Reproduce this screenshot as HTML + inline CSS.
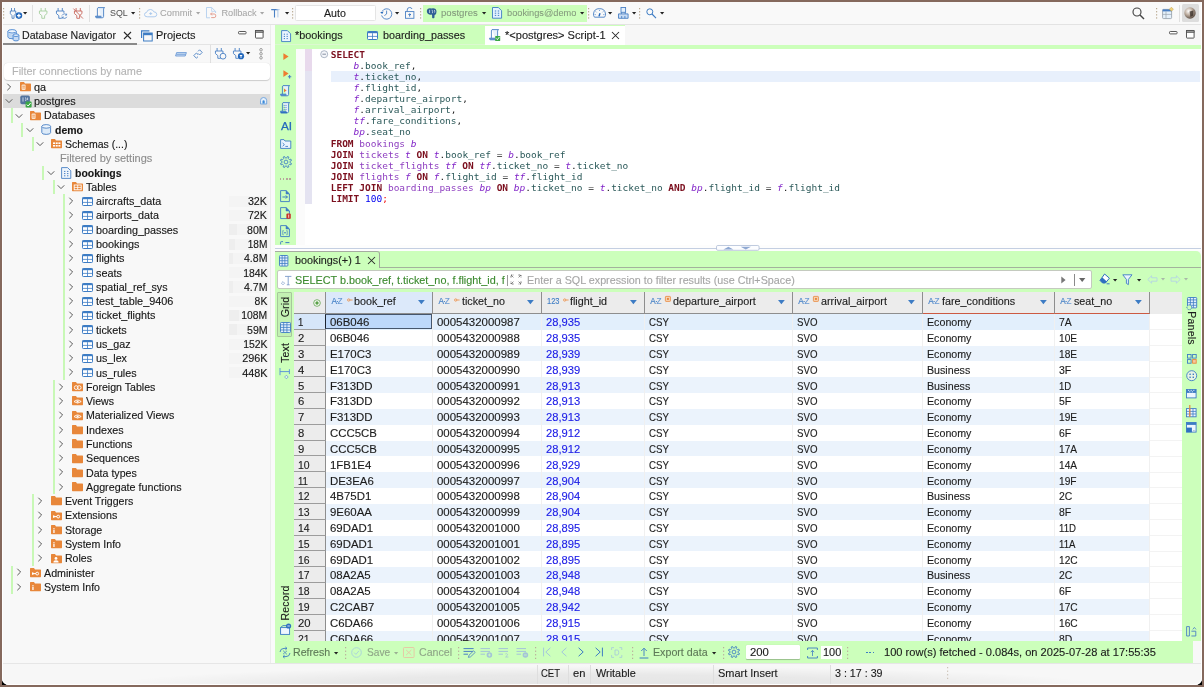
<!DOCTYPE html>
<html lang="en"><head><meta charset="utf-8"><title>DBeaver</title><style>
html,body{margin:0;padding:0;}
body{width:1204px;height:687px;overflow:hidden;position:relative;background:#85695d;font-family:"Liberation Sans",sans-serif;}
#w{position:absolute;left:0;top:0;width:1204px;height:687px;overflow:hidden;will-change:transform;}
#w div,#w svg{position:absolute;}
#w svg{overflow:visible;display:block;}
.t{white-space:pre;line-height:16px;height:16px;}
.m{font-family:"DejaVu Sans Mono","Liberation Mono",monospace;}
.t span{position:static;}
.t{-webkit-text-stroke-width:0.12px;}
.m{-webkit-text-stroke-width:0;}
.kw{color:#7b0f1e;font-weight:bold;}
.al{color:#8226c8;font-style:italic;}
.tb{color:#8e3fc0;}
.co{color:#2c5a5a;}
.nu{color:#0000f0;}
.sc{color:#f00000;}
</style></head><body><div id="w">
<div style="left:2px;top:676px;width:9px;height:9px;background:#000;"></div><div style="left:1193px;top:676px;width:9px;height:9px;background:#000;"></div>
<div style="left:2.00px;top:2.00px;width:1200.00px;height:683.00px;background:#f9f9f9;border-radius:0 0 7px 7px;"></div>
<div style="left:2.00px;top:24.00px;width:1200.00px;height:1.00px;background:#e3e3e3;"></div>
<svg style="left:3.20px;top:7.60px;" width="1.20" height="10.60" viewBox="0 0 1.2 10.6"><rect x="0" y="0.00" width="1.2" height="1.2" fill="#b5a48a"/><rect x="0" y="3.13" width="1.2" height="1.2" fill="#b5a48a"/><rect x="0" y="6.27" width="1.2" height="1.2" fill="#b5a48a"/><rect x="0" y="9.40" width="1.2" height="1.2" fill="#b5a48a"/></svg>
<svg style="left:9.98px;top:8.20px;" width="16.00" height="12.00" viewBox="0 0 16 12"><g transform="scale(0.720,1)"><path d="M2.1 0 V3 M6.3 0 V3" stroke="#3a72b8" stroke-width="0.9" fill="none"/><path d="M0.45 3 H7.95 V5.6 L5.6 7.6 V10.3 H2.8 V7.6 L0.45 5.6 Z" fill="none" stroke="#3a72b8" stroke-width="0.9" stroke-linejoin="round"/></g><circle cx="8.9" cy="7.6" r="3.3" fill="#2468bc"/><path d="M8.9 5.8 V9.4 M7.1 7.6 H10.7" stroke="#fff" stroke-width="1.3"/></svg>
<svg style="left:23.38px;top:12.32px;" width="4.25" height="2.55" viewBox="0 0 5 3"><path d="M0 0 H5 L2.5 3 Z" fill="#222"/></svg>
<div style="left:32.00px;top:4.60px;width:0.90px;height:17.20px;background:#e0e0e0;"></div>
<svg style="left:39.10px;top:7.60px;" width="16.00" height="12.00" viewBox="0 0 16 12"><g transform="scale(1.000,1)"><path d="M2.1 0 V3 M6.3 0 V3" stroke="#a6cf9e" stroke-width="0.9" fill="none"/><path d="M0.45 3 H7.95 V5.6 L5.6 7.6 V10.3 H2.8 V7.6 L0.45 5.6 Z" fill="none" stroke="#a6cf9e" stroke-width="0.9" stroke-linejoin="round"/></g></svg>
<svg style="left:55.80px;top:7.60px;" width="16.00" height="12.00" viewBox="0 0 16 12"><g transform="scale(1.000,1)"><path d="M2.1 0 V3 M6.3 0 V3" stroke="#4a80c4" stroke-width="0.9" fill="none"/><path d="M0.45 3 H7.95 V5.6 L5.6 7.6 V10.3 H2.8 V7.6 L0.45 5.6 Z" fill="none" stroke="#4a80c4" stroke-width="0.9" stroke-linejoin="round"/></g><circle cx="8.4" cy="8" r="3.2" fill="#f9f9f9"/><path d="M6.2 7.4 Q7 5.6 8.8 5.8 Q10 6 10.6 7 M10.6 5.6 V7.2 H9.2" stroke="#4a80c4" stroke-width="0.8" fill="none"/><path d="M10.8 8.8 Q10 10.6 8.2 10.4 Q7 10.2 6.4 9.2 M6.4 10.6 V9 H7.8" stroke="#4a80c4" stroke-width="0.8" fill="none"/></svg>
<svg style="left:73.80px;top:7.60px;" width="16.00" height="12.00" viewBox="0 0 16 12"><g transform="scale(1.000,1)"><path d="M2.1 0 V3 M6.3 0 V3" stroke="#c8685e" stroke-width="0.9" fill="none"/><path d="M0.45 3 H7.95 V5.6 L5.6 7.6 V10.3 H2.8 V7.6 L0.45 5.6 Z" fill="none" stroke="#c8685e" stroke-width="0.9" stroke-linejoin="round"/></g><path d="M-0.6 0.6 L9 10.6" stroke="#c8685e" stroke-width="0.9"/></svg>
<div style="left:88.80px;top:4.60px;width:0.90px;height:17.20px;background:#e0e0e0;"></div>
<svg style="left:94.80px;top:7.20px;" width="11.00" height="12.00" viewBox="0 0 11 12"><path d="M3 0.6 H9.6 Q8.6 0.9 8.6 2 V9.4 Q8.6 10.8 7.2 10.8 H1.6 Q0.5 10.8 0.5 9.2 H6.2" fill="#e6f0fb" stroke="#4a80c4" stroke-width="0.9" stroke-linejoin="round"/><path d="M3 0.6 Q2.4 0.9 2.4 2 V9.2" fill="none" stroke="#4a80c4" stroke-width="0.9"/><path d="M0.9 10 H6.4" stroke="#4a80c4" stroke-width="1.3"/></svg>
<div class="t " style="left:109.80px;transform-origin:0 50%;top:5.40px;font-size:9.20px;color:#555555;transform:scaleX(0.9615);-webkit-text-stroke-width:0.05px;">SQL</div>
<svg style="left:131.07px;top:12.32px;" width="4.25" height="2.55" viewBox="0 0 5 3"><path d="M0 0 H5 L2.5 3 Z" fill="#222"/></svg>
<svg style="left:138.80px;top:7.60px;" width="1.20" height="10.60" viewBox="0 0 1.2 10.6"><rect x="0" y="0.00" width="1.2" height="1.2" fill="#b5a48a"/><rect x="0" y="3.13" width="1.2" height="1.2" fill="#b5a48a"/><rect x="0" y="6.27" width="1.2" height="1.2" fill="#b5a48a"/><rect x="0" y="9.40" width="1.2" height="1.2" fill="#b5a48a"/></svg>
<svg style="left:144.00px;top:8.80px;" width="13.40" height="8.40" viewBox="0 0 13.4 8.4"><path d="M3.2 7.8 Q0.5 7.8 0.5 5.6 Q0.5 3.6 2.6 3.4 Q3.2 0.5 6.4 0.5 Q9 0.5 9.8 2.8 Q12.8 2.9 12.8 5.4 Q12.8 7.8 10.2 7.8 Z" fill="none" stroke="#a6c6ec" stroke-width="0.9"/><path d="M5.2 4.6 H8.2 M6.7 3.2 V6" stroke="#a6c6ec" stroke-width="0.9" fill="none"/></svg>
<div class="t " style="left:160.00px;transform-origin:0 50%;top:5.40px;font-size:9.20px;color:#a6a6a6;transform:scaleX(1.0161);-webkit-text-stroke-width:0.05px;">Commit</div>
<svg style="left:196.18px;top:12.32px;" width="4.25" height="2.55" viewBox="0 0 5 3"><path d="M0 0 H5 L2.5 3 Z" fill="#a6a6a6"/></svg>
<svg style="left:206.40px;top:7.40px;" width="10.60" height="11.60" viewBox="0 0 10.6 11.6"><path d="M0.5 0.5 H5.6 L9.6 4.4 V6" fill="none" stroke="#b2cfee" stroke-width="0.9"/><path d="M0.5 0.5 V10.8 H4" fill="none" stroke="#b2cfee" stroke-width="0.9"/><path d="M5.6 0.5 V4.4 H9.6" fill="none" stroke="#b2cfee" stroke-width="0.7"/><path d="M4.6 7 H8.2 Q9.8 7 9.8 8.8 Q9.8 10.6 8.2 10.6 H5.2 M6 5.6 L4.6 7 L6 8.4" stroke="#e39a8c" stroke-width="0.95" fill="none"/></svg>
<div class="t " style="left:221.40px;transform-origin:0 50%;top:5.40px;font-size:9.20px;color:#a6a6a6;-webkit-text-stroke-width:0.05px;">Rollback</div>
<svg style="left:260.27px;top:12.32px;" width="4.25" height="2.55" viewBox="0 0 5 3"><path d="M0 0 H5 L2.5 3 Z" fill="#a6a6a6"/></svg>
<svg style="left:271.20px;top:9.20px;" width="9.00" height="8.60" viewBox="0 0 9 8.6"><path d="M0.2 0.6 H6.8 M3.5 0.6 V8.4" stroke="#4a80c4" stroke-width="1.1" fill="none"/><path d="M5.4 0.6 H8.6 M6.9 0.6 V8.4" stroke="#9cbce4" stroke-width="0.8" fill="none"/></svg>
<svg style="left:284.57px;top:12.32px;" width="4.25" height="2.55" viewBox="0 0 5 3"><path d="M0 0 H5 L2.5 3 Z" fill="#222"/></svg>
<svg style="left:292.20px;top:7.60px;" width="1.20" height="10.60" viewBox="0 0 1.2 10.6"><rect x="0" y="0.00" width="1.2" height="1.2" fill="#b5a48a"/><rect x="0" y="3.13" width="1.2" height="1.2" fill="#b5a48a"/><rect x="0" y="6.27" width="1.2" height="1.2" fill="#b5a48a"/><rect x="0" y="9.40" width="1.2" height="1.2" fill="#b5a48a"/></svg>
<div style="left:295.30px;top:4.80px;width:81.20px;height:16.40px;background:#fff;border:1px solid #e4e4e4;box-sizing:border-box;border-radius:1.5px;"></div>
<div class="t " style="left:324.00px;transform-origin:0 50%;top:5.80px;font-size:10.10px;color:#1c1c1c;transform:scaleX(1.0540);">Auto</div>
<svg style="left:380.00px;top:7.60px;" width="12.00" height="11.40" viewBox="0 0 12 11.4"><path d="M2.2 3.2 A5.2 5.2 0 1 1 1.6 7.4" fill="none" stroke="#4a80c4" stroke-width="0.9"/><path d="M6.6 2.6 V6 L4.4 7.6" stroke="#4a80c4" stroke-width="0.9" fill="none"/><path d="M0.2 4.2 L2.2 6 L3.6 3.6 Z" fill="#2468bc"/></svg>
<svg style="left:394.68px;top:12.32px;" width="4.25" height="2.55" viewBox="0 0 5 3"><path d="M0 0 H5 L2.5 3 Z" fill="#222"/></svg>
<svg style="left:405.00px;top:7.00px;" width="9.60" height="12.00" viewBox="0 0 9.6 12"><rect x="0.5" y="4.6" width="8.4" height="6.7" fill="none" stroke="#4a80c4" stroke-width="0.9"/><path d="M2.2 4.4 V3 Q2.2 0.5 4.7 0.5 Q6.6 0.5 7 2" fill="none" stroke="#4a80c4" stroke-width="0.9"/><path d="M4.7 7 V9.6 M3.4 8 L4.7 6.7 L6 8" stroke="#2468bc" stroke-width="0.9" fill="none"/></svg>
<svg style="left:419.80px;top:7.60px;" width="1.20" height="10.60" viewBox="0 0 1.2 10.6"><rect x="0" y="0.00" width="1.2" height="1.2" fill="#b5a48a"/><rect x="0" y="3.13" width="1.2" height="1.2" fill="#b5a48a"/><rect x="0" y="6.27" width="1.2" height="1.2" fill="#b5a48a"/><rect x="0" y="9.40" width="1.2" height="1.2" fill="#b5a48a"/></svg>
<div style="left:422.80px;top:4.50px;width:164.00px;height:17.30px;background:#ccffbb;"></div>
<svg style="left:426.40px;top:7.70px;" width="11.00" height="10.80" viewBox="0 0 11 10.8"><path d="M1.6 0.9 Q3.4 -0.2 5.4 0.5 Q7.6 -0.3 9.6 0.9 Q11.2 2.6 10.2 5.4 Q9.8 6.6 8.6 6.9 L8.4 9.8 Q7.4 10.9 6.2 9.9 L6 6.4 Q4 7.4 2.2 6 Q-0.2 3.6 1.6 0.9 Z" fill="#2f5f94"/><path d="M3.6 1.8 V5 M6 1.8 Q7 3.4 6.4 5.2 M8.4 2 Q9 3.4 8.6 4.6" stroke="#dbe6f2" stroke-width="0.75" fill="none"/></svg>
<div class="t " style="left:441.20px;transform-origin:0 50%;top:5.40px;font-size:9.20px;color:#82987c;transform:scaleX(1.0429);-webkit-text-stroke-width:0.05px;">postgres</div>
<svg style="left:481.88px;top:12.32px;" width="4.25" height="2.55" viewBox="0 0 5 3"><path d="M0 0 H5 L2.5 3 Z" fill="#222"/></svg>
<svg style="left:492.20px;top:7.20px;" width="10.40" height="12.00" viewBox="0 0 10.4 12"><path d="M0.5 0.5 H6.4 L9.6 3.7 V11.2 H0.5 Z" fill="#e4f2ff" stroke="#3d7cc4" stroke-width="0.9"/><path d="M2.8 4 H4.2 M2.8 6.2 H4.2 M2.8 8.4 H4.2 M5.8 4 H7.2 M5.8 6.2 H7.2 M5.8 8.4 H7.2" stroke="#3d7cc4" stroke-width="1"/></svg>
<div class="t " style="left:507.30px;transform-origin:0 50%;top:5.40px;font-size:9.20px;color:#82987c;transform:scaleX(1.0032);-webkit-text-stroke-width:0.05px;">bookings@demo</div>
<svg style="left:580.27px;top:12.32px;" width="4.25" height="2.55" viewBox="0 0 5 3"><path d="M0 0 H5 L2.5 3 Z" fill="#222"/></svg>
<svg style="left:587.90px;top:7.60px;" width="1.20" height="10.60" viewBox="0 0 1.2 10.6"><rect x="0" y="0.00" width="1.2" height="1.2" fill="#b5a48a"/><rect x="0" y="3.13" width="1.2" height="1.2" fill="#b5a48a"/><rect x="0" y="6.27" width="1.2" height="1.2" fill="#b5a48a"/><rect x="0" y="9.40" width="1.2" height="1.2" fill="#b5a48a"/></svg>
<svg style="left:593.00px;top:8.00px;" width="13.00" height="10.00" viewBox="0 0 13 10"><path d="M1.5 9.2 Q0.3 7.8 0.5 6 Q1 0.6 6.5 0.6 Q12 0.6 12.5 6 Q12.7 7.8 11.5 9.2 Z" fill="none" stroke="#4a80c4" stroke-width="0.9"/><path d="M6.5 1.8 V3 M2.6 3.4 L3.5 4.3 M10.4 3.4 L9.5 4.3 M1.6 6.6 H2.8 M11.4 6.6 H10.2" stroke="#4a80c4" stroke-width="0.7"/><path d="M6 8.4 L7 5.2" stroke="#2468bc" stroke-width="1.4"/></svg>
<svg style="left:608.27px;top:12.32px;" width="4.25" height="2.55" viewBox="0 0 5 3"><path d="M0 0 H5 L2.5 3 Z" fill="#222"/></svg>
<svg style="left:617.70px;top:7.20px;" width="10.80" height="12.00" viewBox="0 0 10.8 12"><rect x="3" y="0.5" width="4.6" height="4.8" fill="#e4f0fc" stroke="#4a80c4" stroke-width="0.9"/><path d="M0.5 11.3 V6.9 H10.1 V11.3 Z" fill="#c8dcf4" stroke="#4a80c4" stroke-width="0.9"/><path d="M3.4 5.3 V6.9 M7.2 5.3 V6.9 M3.7 11.2 V9 M6.9 11.2 V9" stroke="#4a80c4" stroke-width="0.9"/></svg>
<svg style="left:631.88px;top:12.32px;" width="4.25" height="2.55" viewBox="0 0 5 3"><path d="M0 0 H5 L2.5 3 Z" fill="#222"/></svg>
<svg style="left:639.40px;top:7.60px;" width="1.20" height="10.60" viewBox="0 0 1.2 10.6"><rect x="0" y="0.00" width="1.2" height="1.2" fill="#b5a48a"/><rect x="0" y="3.13" width="1.2" height="1.2" fill="#b5a48a"/><rect x="0" y="6.27" width="1.2" height="1.2" fill="#b5a48a"/><rect x="0" y="9.40" width="1.2" height="1.2" fill="#b5a48a"/></svg>
<svg style="left:646.20px;top:7.60px;" width="11.00" height="11.00" viewBox="0 0 11 11"><circle cx="3.8" cy="3.8" r="3" fill="none" stroke="#3d7cc4" stroke-width="1"/><path d="M6 6 L10 10.2" stroke="#3d7cc4" stroke-width="1.1"/></svg>
<svg style="left:659.67px;top:12.32px;" width="4.25" height="2.55" viewBox="0 0 5 3"><path d="M0 0 H5 L2.5 3 Z" fill="#222"/></svg>
<svg style="left:1131.50px;top:6.80px;" width="13.00" height="13.00" viewBox="0 0 13 13"><circle cx="5" cy="5" r="4" fill="none" stroke="#444" stroke-width="1.15"/><path d="M8 8 L12 12" stroke="#444" stroke-width="1.35"/></svg>
<svg style="left:1156.00px;top:7.60px;" width="1.20" height="10.60" viewBox="0 0 1.2 10.6"><rect x="0" y="0.00" width="1.2" height="1.2" fill="#b5a48a"/><rect x="0" y="3.13" width="1.2" height="1.2" fill="#b5a48a"/><rect x="0" y="6.27" width="1.2" height="1.2" fill="#b5a48a"/><rect x="0" y="9.40" width="1.2" height="1.2" fill="#b5a48a"/></svg>
<svg style="left:1162.00px;top:6.60px;" width="12.00" height="12.40" viewBox="0 0 12 12.4"><rect x="0.6" y="2.4" width="9" height="9.2" rx="0.9" fill="#e6f1fb" stroke="#8f9aa6" stroke-width="0.8"/><rect x="0.6" y="2.4" width="9" height="2" fill="#4a80c4"/><path d="M0.6 7.4 H9.6 M4 4.4 V11.6" stroke="#9aa4ae" stroke-width="0.7"/><path d="M9.4 0.2 L11.4 2.2 L9.4 4.2 L7.4 2.2 Z" fill="#efd27e" stroke="#bf9a3a" stroke-width="0.5"/></svg>
<div style="left:1179.00px;top:4.60px;width:0.90px;height:17.20px;background:#e0e0e0;"></div>
<div style="left:1181.50px;top:4.40px;width:17.20px;height:17.20px;background:#dddddd;border-radius:1.5px;"></div>
<svg style="left:1184.00px;top:7.00px;" width="12.00" height="12.00" viewBox="0 0 12 12"><defs><radialGradient id="av" cx="0.38" cy="0.34" r="0.72"><stop offset="0" stop-color="#ffffff"/><stop offset="0.45" stop-color="#c0b0a2"/><stop offset="1" stop-color="#54443a"/></radialGradient></defs><circle cx="6" cy="6" r="5.7" fill="url(#av)"/><path d="M5.6 4.6 L9.4 3.6 L9.2 8.6 L6.4 10 Z" fill="#2a201a" opacity="0.7"/></svg>
<div style="left:2.00px;top:25.00px;width:268.20px;height:638.50px;background:#f8f8f8;"></div>
<div style="left:270.20px;top:25.00px;width:4.60px;height:638.50px;background:#fafafa;"></div>
<div style="left:270.00px;top:25.00px;width:0.90px;height:638.50px;background:#ececec;"></div>
<svg style="left:6.60px;top:29.20px;" width="13.00" height="12.40" viewBox="0 0 13 12.4"><path d="M0.9 2.3 V8 Q0.9 9.7 5.1 9.7 Q9.3 9.7 9.3 8 V2.3" fill="#d6e6f8" stroke="#4a86d0" stroke-width="0.9"/><ellipse cx="5.1" cy="2.3" rx="4.2" ry="1.7" fill="#eef5fd" stroke="#4a86d0" stroke-width="0.9"/><path d="M3 5 V8.4 M5 5.4 V8.8" stroke="#9cbfe8" stroke-width="0.8"/><path d="M6.1 6.2 V10.6 Q6.1 11.9 9 11.9 Q11.9 11.9 11.9 10.6 V6.2" fill="#c6dbf4" stroke="#4a86d0" stroke-width="0.9"/><ellipse cx="9" cy="6.2" rx="2.9" ry="1.3" fill="#e4effb" stroke="#4a86d0" stroke-width="0.9"/></svg>
<div class="t " style="left:22.20px;transform-origin:0 50%;top:28.30px;font-size:10.10px;color:#1c1c1c;transform:scaleX(1.0541);">Database Navigator</div>
<svg style="left:122.60px;top:30.80px;" width="9.00" height="9.00" viewBox="0 0 9 9"><path d="M1 1 L8 8 M8 1 L1 8" stroke="#2a2a2a" stroke-width="1.1"/></svg>
<div style="left:3.00px;top:43.30px;width:134.00px;height:1.60px;background:#8a8a8a;"></div>
<div style="left:137.00px;top:44.20px;width:133.50px;height:0.80px;background:#e4e4e4;"></div>
<svg style="left:140.50px;top:29.50px;" width="12.00" height="12.00" viewBox="0 0 12 12"><path d="M0.6 8 V0.8 H8.4" fill="none" stroke="#3d7cc4" stroke-width="1.2"/><rect x="2.6" y="3" width="8.6" height="8" fill="#f8f8f8" stroke="#3d7cc4" stroke-width="1"/><rect x="2.6" y="3" width="8.6" height="2.2" fill="#3d7cc4"/></svg>
<div class="t " style="left:156.20px;transform-origin:0 50%;top:28.30px;font-size:10.10px;color:#1c1c1c;transform:scaleX(1.0826);">Projects</div>
<svg style="left:237.50px;top:30.60px;" width="8.60" height="3.40" viewBox="0 0 8.6 3.4"><rect x="0.5" y="0.5" width="7.6" height="2.4" rx="0.8" fill="#fff" stroke="#444" stroke-width="0.9"/></svg>
<svg style="left:255.00px;top:30.20px;" width="8.60" height="8.60" viewBox="0 0 8.6 8.6"><rect x="0.5" y="0.5" width="7.6" height="7.6" rx="0.6" fill="#fff" stroke="#444" stroke-width="0.9"/><rect x="0.5" y="0.5" width="7.6" height="2" fill="#999" stroke="#444" stroke-width="0.6"/></svg>
<svg style="left:174.60px;top:51.60px;" width="12.00" height="5.00" viewBox="0 0 12 5"><path d="M1.6 0.6 H11.4 L10.2 4 H0.6 Z" fill="#cfe0f4" stroke="#5a8ed0" stroke-width="0.8" stroke-linejoin="round"/><path d="M1.6 2.3 H10.4" stroke="#5a8ed0" stroke-width="0.7"/></svg>
<svg style="left:193.00px;top:49.00px;" width="10.00" height="10.00" viewBox="0 0 10 10"><path d="M0.8 6.6 L3.4 4 L5 5.6 M3.4 9.2 L0.8 6.6 M9.2 3.4 L6.6 6 L5 4.4 M6.6 0.8 L9.2 3.4 M3.4 9.2 L5 7.6 M6.6 0.8 L5 2.4" fill="none" stroke="#4a80c4" stroke-width="0.9"/></svg>
<div style="left:209.50px;top:45.00px;width:0.80px;height:17.50px;background:#e0e0e0;"></div>
<svg style="left:215.40px;top:48.00px;" width="16.00" height="12.00" viewBox="0 0 16 12"><g transform="scale(1.000,1)"><path d="M2.1 0 V3 M6.3 0 V3" stroke="#4a80c4" stroke-width="0.9" fill="none"/><path d="M0.45 3 H7.95 V5.6 L5.6 7.6 V10.3 H2.8 V7.6 L0.45 5.6 Z" fill="none" stroke="#4a80c4" stroke-width="0.9" stroke-linejoin="round"/></g><circle cx="8" cy="8.2" r="2.9" fill="#f8f8f8" stroke="#4a80c4" stroke-width="0.9"/></svg>
<svg style="left:233.20px;top:48.00px;" width="16.00" height="12.00" viewBox="0 0 16 12"><g transform="scale(1.000,1)"><path d="M2.1 0 V3 M6.3 0 V3" stroke="#4a80c4" stroke-width="0.9" fill="none"/><path d="M0.45 3 H7.95 V5.6 L5.6 7.6 V10.3 H2.8 V7.6 L0.45 5.6 Z" fill="none" stroke="#4a80c4" stroke-width="0.9" stroke-linejoin="round"/></g><circle cx="8" cy="8.2" r="3.1" fill="#2468bc"/><path d="M6.5 7 H9.5 L8.4 8.4 V9.9 H7.6 V8.4 Z" fill="#fff"/></svg>
<svg style="left:246.28px;top:52.23px;" width="4.25" height="2.55" viewBox="0 0 5 3"><path d="M0 0 H5 L2.5 3 Z" fill="#222"/></svg>
<svg style="left:259.30px;top:48.00px;" width="4.00" height="12.00" viewBox="0 0 4 12"><circle cx="2" cy="1.8" r="1.3" fill="none" stroke="#777" stroke-width="0.7"/><circle cx="2" cy="5.8" r="1.3" fill="none" stroke="#777" stroke-width="0.7"/><circle cx="2" cy="9.8" r="1.3" fill="none" stroke="#777" stroke-width="0.7"/></svg>
<div style="left:3.50px;top:63.40px;width:266.00px;height:16.20px;background:#fff;border-radius:4px;box-shadow:0 0.6px 1px rgba(0,0,0,0.18);"></div>
<div class="t " style="left:11.50px;transform-origin:0 50%;top:64.10px;font-size:10.10px;color:#b4b4b4;transform:scaleX(1.0771);">Filter connections by name</div>
<div style="left:2.00px;top:93.94px;width:268.20px;height:14.49px;background:#dcdcdc;"></div>
<svg style="left:5.70px;top:82.70px;" width="6.00" height="8.00" viewBox="0 0 6 8"><path d="M1.6 1 L4.6 4 L1.6 7" fill="none" stroke="#505050" stroke-width="0.95" stroke-linecap="round" stroke-linejoin="round"/></svg>
<svg style="left:19.60px;top:82.20px;" width="11.00" height="9.40" viewBox="0 0 11 9.4"><path d="M0 0.6 Q0 0 0.6 0 H4 L5 1.5 H10.4 Q11 1.5 11 2.1 V8.6 Q11 9.2 10.4 9.2 H0.6 Q0 9.2 0 8.6 Z" fill="#e8873a"/><rect x="1.6" y="2.6" width="4" height="5.4" rx="1" fill="#fbe3cc"/><path d="M2.3 4.3 H4.9 M2.3 6 H4.9" stroke="#e8873a" stroke-width="0.7"/></svg>
<div class="t k" style="left:33.60px;transform-origin:0 50%;top:79.90px;font-size:10.10px;color:#161616;transform:scaleX(1.0750);">qa</div>
<svg style="left:4.70px;top:98.29px;" width="8.00" height="6.00" viewBox="0 0 8 6"><path d="M1 1.6 L4 4.6 L7 1.6" fill="none" stroke="#505050" stroke-width="0.95" stroke-linecap="round" stroke-linejoin="round"/></svg>
<svg style="left:19.60px;top:94.79px;" width="12.00" height="13.00" viewBox="0 0 12 13"><rect x="0.3" y="0.6" width="9.6" height="8.6" rx="1.6" fill="#53749e"/><path d="M3 2.4 V6.6 M5.4 2.4 Q6.6 4 5.6 6 M7.6 2.6 V5" stroke="#e4ecf6" stroke-width="0.8" fill="none"/><rect x="5.6" y="6.6" width="6" height="6" rx="0.8" fill="#3aa845"/><path d="M6.8 9.6 L8.2 11 L10.6 8" stroke="#fff" stroke-width="1" fill="none"/></svg>
<div class="t k" style="left:33.60px;transform-origin:0 50%;top:94.19px;font-size:10.10px;color:#161616;transform:scaleX(1.0750);">postgres</div>
<div style="left:10.90px;top:108.43px;width:2.10px;height:14.29px;background:#c8f8b6;"></div>
<svg style="left:15.15px;top:112.57px;" width="8.00" height="6.00" viewBox="0 0 8 6"><path d="M1 1.6 L4 4.6 L7 1.6" fill="none" stroke="#505050" stroke-width="0.95" stroke-linecap="round" stroke-linejoin="round"/></svg>
<svg style="left:30.05px;top:110.77px;" width="11.00" height="9.40" viewBox="0 0 11 9.4"><path d="M0 0.6 Q0 0 0.6 0 H4 L5 1.5 H10.4 Q11 1.5 11 2.1 V8.6 Q11 9.2 10.4 9.2 H0.6 Q0 9.2 0 8.6 Z" fill="#e8873a"/><rect x="1.6" y="2.6" width="4" height="5.4" rx="1" fill="#fbe3cc"/><path d="M2.3 4.3 H4.9 M2.3 6 H4.9" stroke="#e8873a" stroke-width="0.7"/></svg>
<div class="t k" style="left:44.05px;transform-origin:0 50%;top:108.47px;font-size:10.10px;color:#161616;transform:scaleX(1.0576);">Databases</div>
<div style="left:21.35px;top:122.71px;width:2.10px;height:14.29px;background:#c8f8b6;"></div>
<svg style="left:25.60px;top:126.86px;" width="8.00" height="6.00" viewBox="0 0 8 6"><path d="M1 1.6 L4 4.6 L7 1.6" fill="none" stroke="#505050" stroke-width="0.95" stroke-linecap="round" stroke-linejoin="round"/></svg>
<svg style="left:40.50px;top:124.36px;" width="11.00" height="11.00" viewBox="0 0 11 11"><path d="M0.8 2.4 V8.6 Q0.8 10.4 5.2 10.4 Q9.6 10.4 9.6 8.6 V2.4" fill="#dceaf8" stroke="#4a80c4" stroke-width="0.9"/><ellipse cx="5.2" cy="2.4" rx="4.4" ry="1.8" fill="#eef5fc" stroke="#4a80c4" stroke-width="0.9"/></svg>
<div class="t k" style="left:54.50px;transform-origin:0 50%;top:122.76px;font-size:10.10px;color:#161616;transform:scaleX(1.0374);font-weight:bold;">demo</div>
<div style="left:31.80px;top:137.00px;width:2.10px;height:14.29px;background:#c8f8b6;"></div>
<svg style="left:36.05px;top:141.14px;" width="8.00" height="6.00" viewBox="0 0 8 6"><path d="M1 1.6 L4 4.6 L7 1.6" fill="none" stroke="#505050" stroke-width="0.95" stroke-linecap="round" stroke-linejoin="round"/></svg>
<svg style="left:50.95px;top:139.34px;" width="11.00" height="9.40" viewBox="0 0 11 9.4"><path d="M0 0.6 Q0 0 0.6 0 H4 L5 1.5 H10.4 Q11 1.5 11 2.1 V8.6 Q11 9.2 10.4 9.2 H0.6 Q0 9.2 0 8.6 Z" fill="#e8873a"/><rect x="2" y="3.4" width="2" height="1.6" fill="#fff"/><rect x="4.7" y="3.4" width="2" height="1.6" fill="#fff"/><rect x="7.4" y="3.4" width="2" height="1.6" fill="#fff"/><rect x="2" y="6" width="2" height="1.6" fill="#fff"/><rect x="4.7" y="6" width="2" height="1.6" fill="#fff"/><rect x="7.4" y="6" width="2" height="1.6" fill="#fff"/></svg>
<div class="t k" style="left:64.95px;transform-origin:0 50%;top:137.04px;font-size:10.10px;color:#161616;transform:scaleX(1.0397);">Schemas (...)</div>
<div class="t " style="left:60.30px;transform-origin:0 50%;top:151.33px;font-size:10.10px;color:#8c8c8c;transform:scaleX(1.0901);">Filtered by settings</div>
<div style="left:42.25px;top:165.57px;width:2.10px;height:14.29px;background:#c8f8b6;"></div>
<svg style="left:46.50px;top:169.71px;" width="8.00" height="6.00" viewBox="0 0 8 6"><path d="M1 1.6 L4 4.6 L7 1.6" fill="none" stroke="#505050" stroke-width="0.95" stroke-linecap="round" stroke-linejoin="round"/></svg>
<svg style="left:61.40px;top:166.71px;" width="10.40" height="12.00" viewBox="0 0 10.4 12"><path d="M0.6 0.6 H6.6 L9.8 3.8 V11.4 H0.6 Z" fill="#eef5fc" stroke="#4a80c4" stroke-width="0.9"/><path d="M3 4.4 H4.4 M3 6.6 H4.4 M3 8.8 H4.4 M6 4.4 H7.4 M6 6.6 H7.4 M6 8.8 H7.4" stroke="#4a80c4" stroke-width="1"/></svg>
<div class="t k" style="left:75.40px;transform-origin:0 50%;top:165.61px;font-size:10.10px;color:#161616;transform:scaleX(1.0374);font-weight:bold;">bookings</div>
<div style="left:52.70px;top:179.86px;width:2.10px;height:14.29px;background:#c8f8b6;"></div>
<svg style="left:56.95px;top:184.00px;" width="8.00" height="6.00" viewBox="0 0 8 6"><path d="M1 1.6 L4 4.6 L7 1.6" fill="none" stroke="#505050" stroke-width="0.95" stroke-linecap="round" stroke-linejoin="round"/></svg>
<svg style="left:71.85px;top:182.20px;" width="11.00" height="9.40" viewBox="0 0 11 9.4"><path d="M0 0.6 Q0 0 0.6 0 H4 L5 1.5 H10.4 Q11 1.5 11 2.1 V8.6 Q11 9.2 10.4 9.2 H0.6 Q0 9.2 0 8.6 Z" fill="#e8873a"/><rect x="2.2" y="3" width="7" height="4.8" fill="none" stroke="#fff" stroke-width="0.9"/><path d="M2.2 5.4 H9.2 M5.7 3 V7.8" stroke="#fff" stroke-width="0.8"/></svg>
<div class="t k" style="left:85.85px;transform-origin:0 50%;top:179.90px;font-size:10.10px;color:#161616;transform:scaleX(1.0516);">Tables</div>
<div style="left:63.15px;top:194.14px;width:2.10px;height:14.29px;background:#c8f8b6;"></div>
<svg style="left:68.40px;top:196.99px;" width="6.00" height="8.00" viewBox="0 0 6 8"><path d="M1.6 1 L4.6 4 L1.6 7" fill="none" stroke="#505050" stroke-width="0.95" stroke-linecap="round" stroke-linejoin="round"/></svg>
<svg style="left:82.30px;top:196.79px;" width="11.00" height="9.00" viewBox="0 0 11 9"><rect x="0.5" y="0.5" width="10" height="8" rx="0.8" fill="#fff" stroke="#3d7cc4" stroke-width="1"/><rect x="0.5" y="0.5" width="10" height="1.7" fill="#3d7cc4"/><path d="M0.5 5.4 H10.5 M5.5 2.2 V8.5" stroke="#3d7cc4" stroke-width="0.8"/></svg>
<div class="t k" style="left:96.30px;transform-origin:0 50%;top:194.19px;font-size:10.10px;color:#161616;transform:scaleX(1.0681);">aircrafts_data</div>
<div style="left:228.50px;top:195.69px;width:39.50px;height:11.20px;background:#f4f4f4;"></div>
<div class="t k" style="right:936.70px;transform-origin:100% 50%;top:194.19px;font-size:10.10px;color:#161616;transform:scaleX(1.0600);">32K</div>
<div style="left:63.15px;top:208.43px;width:2.10px;height:14.29px;background:#c8f8b6;"></div>
<svg style="left:68.40px;top:211.27px;" width="6.00" height="8.00" viewBox="0 0 6 8"><path d="M1.6 1 L4.6 4 L1.6 7" fill="none" stroke="#505050" stroke-width="0.95" stroke-linecap="round" stroke-linejoin="round"/></svg>
<svg style="left:82.30px;top:211.07px;" width="11.00" height="9.00" viewBox="0 0 11 9"><rect x="0.5" y="0.5" width="10" height="8" rx="0.8" fill="#fff" stroke="#3d7cc4" stroke-width="1"/><rect x="0.5" y="0.5" width="10" height="1.7" fill="#3d7cc4"/><path d="M0.5 5.4 H10.5 M5.5 2.2 V8.5" stroke="#3d7cc4" stroke-width="0.8"/></svg>
<div class="t k" style="left:96.30px;transform-origin:0 50%;top:208.47px;font-size:10.10px;color:#161616;transform:scaleX(1.0679);">airports_data</div>
<div style="left:228.50px;top:209.97px;width:39.50px;height:11.20px;background:#f4f4f4;"></div>
<div class="t k" style="right:936.70px;transform-origin:100% 50%;top:208.47px;font-size:10.10px;color:#161616;transform:scaleX(1.0600);">72K</div>
<div style="left:63.15px;top:222.71px;width:2.10px;height:14.29px;background:#c8f8b6;"></div>
<svg style="left:68.40px;top:225.56px;" width="6.00" height="8.00" viewBox="0 0 6 8"><path d="M1.6 1 L4.6 4 L1.6 7" fill="none" stroke="#505050" stroke-width="0.95" stroke-linecap="round" stroke-linejoin="round"/></svg>
<svg style="left:82.30px;top:225.36px;" width="11.00" height="9.00" viewBox="0 0 11 9"><rect x="0.5" y="0.5" width="10" height="8" rx="0.8" fill="#fff" stroke="#3d7cc4" stroke-width="1"/><rect x="0.5" y="0.5" width="10" height="1.7" fill="#3d7cc4"/><path d="M0.5 5.4 H10.5 M5.5 2.2 V8.5" stroke="#3d7cc4" stroke-width="0.8"/></svg>
<div class="t k" style="left:96.30px;transform-origin:0 50%;top:222.76px;font-size:10.10px;color:#161616;transform:scaleX(1.0695);">boarding_passes</div>
<div style="left:228.50px;top:224.26px;width:39.50px;height:11.20px;background:#f4f4f4;"></div>
<div style="left:228.50px;top:224.26px;width:8.98px;height:11.20px;background:#eeeeee;"></div>
<div class="t k" style="right:936.70px;transform-origin:100% 50%;top:222.76px;font-size:10.10px;color:#161616;transform:scaleX(1.0515);">80M</div>
<div style="left:63.15px;top:237.00px;width:2.10px;height:14.29px;background:#c8f8b6;"></div>
<svg style="left:68.40px;top:239.84px;" width="6.00" height="8.00" viewBox="0 0 6 8"><path d="M1.6 1 L4.6 4 L1.6 7" fill="none" stroke="#505050" stroke-width="0.95" stroke-linecap="round" stroke-linejoin="round"/></svg>
<svg style="left:82.30px;top:239.64px;" width="11.00" height="9.00" viewBox="0 0 11 9"><rect x="0.5" y="0.5" width="10" height="8" rx="0.8" fill="#fff" stroke="#3d7cc4" stroke-width="1"/><rect x="0.5" y="0.5" width="10" height="1.7" fill="#3d7cc4"/><path d="M0.5 5.4 H10.5 M5.5 2.2 V8.5" stroke="#3d7cc4" stroke-width="0.8"/></svg>
<div class="t k" style="left:96.30px;transform-origin:0 50%;top:237.04px;font-size:10.10px;color:#161616;transform:scaleX(1.0750);">bookings</div>
<div style="left:228.50px;top:238.54px;width:39.50px;height:11.20px;background:#f4f4f4;"></div>
<div style="left:228.50px;top:238.54px;width:6.13px;height:11.20px;background:#eeeeee;"></div>
<div class="t k" style="right:936.70px;transform-origin:100% 50%;top:237.04px;font-size:10.10px;color:#161616;">18M</div>
<div style="left:63.15px;top:251.29px;width:2.10px;height:14.29px;background:#c8f8b6;"></div>
<svg style="left:68.40px;top:254.13px;" width="6.00" height="8.00" viewBox="0 0 6 8"><path d="M1.6 1 L4.6 4 L1.6 7" fill="none" stroke="#505050" stroke-width="0.95" stroke-linecap="round" stroke-linejoin="round"/></svg>
<svg style="left:82.30px;top:253.93px;" width="11.00" height="9.00" viewBox="0 0 11 9"><rect x="0.5" y="0.5" width="10" height="8" rx="0.8" fill="#fff" stroke="#3d7cc4" stroke-width="1"/><rect x="0.5" y="0.5" width="10" height="1.7" fill="#3d7cc4"/><path d="M0.5 5.4 H10.5 M5.5 2.2 V8.5" stroke="#3d7cc4" stroke-width="0.8"/></svg>
<div class="t k" style="left:96.30px;transform-origin:0 50%;top:251.33px;font-size:10.10px;color:#161616;transform:scaleX(1.0750);">flights</div>
<div style="left:228.50px;top:252.83px;width:39.50px;height:11.20px;background:#f4f4f4;"></div>
<div style="left:228.50px;top:252.83px;width:4.59px;height:11.20px;background:#eeeeee;"></div>
<div class="t k" style="right:936.70px;transform-origin:100% 50%;top:251.33px;font-size:10.10px;color:#161616;transform:scaleX(1.0451);">4.8M</div>
<div style="left:63.15px;top:265.57px;width:2.10px;height:14.29px;background:#c8f8b6;"></div>
<svg style="left:68.40px;top:268.41px;" width="6.00" height="8.00" viewBox="0 0 6 8"><path d="M1.6 1 L4.6 4 L1.6 7" fill="none" stroke="#505050" stroke-width="0.95" stroke-linecap="round" stroke-linejoin="round"/></svg>
<svg style="left:82.30px;top:268.21px;" width="11.00" height="9.00" viewBox="0 0 11 9"><rect x="0.5" y="0.5" width="10" height="8" rx="0.8" fill="#fff" stroke="#3d7cc4" stroke-width="1"/><rect x="0.5" y="0.5" width="10" height="1.7" fill="#3d7cc4"/><path d="M0.5 5.4 H10.5 M5.5 2.2 V8.5" stroke="#3d7cc4" stroke-width="0.8"/></svg>
<div class="t k" style="left:96.30px;transform-origin:0 50%;top:265.61px;font-size:10.10px;color:#161616;transform:scaleX(1.0750);">seats</div>
<div style="left:228.50px;top:267.11px;width:39.50px;height:11.20px;background:#f4f4f4;"></div>
<div class="t k" style="right:936.70px;transform-origin:100% 50%;top:265.61px;font-size:10.10px;color:#161616;transform:scaleX(1.0338);">184K</div>
<div style="left:63.15px;top:279.86px;width:2.10px;height:14.29px;background:#c8f8b6;"></div>
<svg style="left:68.40px;top:282.70px;" width="6.00" height="8.00" viewBox="0 0 6 8"><path d="M1.6 1 L4.6 4 L1.6 7" fill="none" stroke="#505050" stroke-width="0.95" stroke-linecap="round" stroke-linejoin="round"/></svg>
<svg style="left:82.30px;top:282.50px;" width="11.00" height="9.00" viewBox="0 0 11 9"><rect x="0.5" y="0.5" width="10" height="8" rx="0.8" fill="#fff" stroke="#3d7cc4" stroke-width="1"/><rect x="0.5" y="0.5" width="10" height="1.7" fill="#3d7cc4"/><path d="M0.5 5.4 H10.5 M5.5 2.2 V8.5" stroke="#3d7cc4" stroke-width="0.8"/></svg>
<div class="t k" style="left:96.30px;transform-origin:0 50%;top:279.90px;font-size:10.10px;color:#161616;transform:scaleX(1.0625);">spatial_ref_sys</div>
<div style="left:228.50px;top:281.40px;width:39.50px;height:11.20px;background:#f4f4f4;"></div>
<div style="left:228.50px;top:281.40px;width:4.59px;height:11.20px;background:#eeeeee;"></div>
<div class="t k" style="right:936.70px;transform-origin:100% 50%;top:279.90px;font-size:10.10px;color:#161616;transform:scaleX(1.0451);">4.7M</div>
<div style="left:63.15px;top:294.14px;width:2.10px;height:14.29px;background:#c8f8b6;"></div>
<svg style="left:68.40px;top:296.99px;" width="6.00" height="8.00" viewBox="0 0 6 8"><path d="M1.6 1 L4.6 4 L1.6 7" fill="none" stroke="#505050" stroke-width="0.95" stroke-linecap="round" stroke-linejoin="round"/></svg>
<svg style="left:82.30px;top:296.79px;" width="11.00" height="9.00" viewBox="0 0 11 9"><rect x="0.5" y="0.5" width="10" height="8" rx="0.8" fill="#fff" stroke="#3d7cc4" stroke-width="1"/><rect x="0.5" y="0.5" width="10" height="1.7" fill="#3d7cc4"/><path d="M0.5 5.4 H10.5 M5.5 2.2 V8.5" stroke="#3d7cc4" stroke-width="0.8"/></svg>
<div class="t k" style="left:96.30px;transform-origin:0 50%;top:294.19px;font-size:10.10px;color:#161616;transform:scaleX(1.0773);">test_table_9406</div>
<div style="left:228.50px;top:295.69px;width:39.50px;height:11.20px;background:#f4f4f4;"></div>
<div class="t k" style="right:936.70px;transform-origin:100% 50%;top:294.19px;font-size:10.10px;color:#161616;transform:scaleX(1.0327);">8K</div>
<div style="left:63.15px;top:308.43px;width:2.10px;height:14.29px;background:#c8f8b6;"></div>
<svg style="left:68.40px;top:311.27px;" width="6.00" height="8.00" viewBox="0 0 6 8"><path d="M1.6 1 L4.6 4 L1.6 7" fill="none" stroke="#505050" stroke-width="0.95" stroke-linecap="round" stroke-linejoin="round"/></svg>
<svg style="left:82.30px;top:311.07px;" width="11.00" height="9.00" viewBox="0 0 11 9"><rect x="0.5" y="0.5" width="10" height="8" rx="0.8" fill="#fff" stroke="#3d7cc4" stroke-width="1"/><rect x="0.5" y="0.5" width="10" height="1.7" fill="#3d7cc4"/><path d="M0.5 5.4 H10.5 M5.5 2.2 V8.5" stroke="#3d7cc4" stroke-width="0.8"/></svg>
<div class="t k" style="left:96.30px;transform-origin:0 50%;top:308.47px;font-size:10.10px;color:#161616;transform:scaleX(1.0674);">ticket_flights</div>
<div style="left:228.50px;top:309.97px;width:39.50px;height:11.20px;background:#f4f4f4;"></div>
<div style="left:228.50px;top:309.97px;width:10.64px;height:11.20px;background:#eeeeee;"></div>
<div class="t k" style="right:936.70px;transform-origin:100% 50%;top:308.47px;font-size:10.10px;color:#161616;transform:scaleX(1.0289);">108M</div>
<div style="left:63.15px;top:322.71px;width:2.10px;height:14.29px;background:#c8f8b6;"></div>
<svg style="left:68.40px;top:325.56px;" width="6.00" height="8.00" viewBox="0 0 6 8"><path d="M1.6 1 L4.6 4 L1.6 7" fill="none" stroke="#505050" stroke-width="0.95" stroke-linecap="round" stroke-linejoin="round"/></svg>
<svg style="left:82.30px;top:325.36px;" width="11.00" height="9.00" viewBox="0 0 11 9"><rect x="0.5" y="0.5" width="10" height="8" rx="0.8" fill="#fff" stroke="#3d7cc4" stroke-width="1"/><rect x="0.5" y="0.5" width="10" height="1.7" fill="#3d7cc4"/><path d="M0.5 5.4 H10.5 M5.5 2.2 V8.5" stroke="#3d7cc4" stroke-width="0.8"/></svg>
<div class="t k" style="left:96.30px;transform-origin:0 50%;top:322.76px;font-size:10.10px;color:#161616;transform:scaleX(1.0750);">tickets</div>
<div style="left:228.50px;top:324.26px;width:39.50px;height:11.20px;background:#f4f4f4;"></div>
<div style="left:228.50px;top:324.26px;width:8.50px;height:11.20px;background:#eeeeee;"></div>
<div class="t k" style="right:936.70px;transform-origin:100% 50%;top:322.76px;font-size:10.10px;color:#161616;transform:scaleX(1.0515);">59M</div>
<div style="left:63.15px;top:337.00px;width:2.10px;height:14.29px;background:#c8f8b6;"></div>
<svg style="left:68.40px;top:339.84px;" width="6.00" height="8.00" viewBox="0 0 6 8"><path d="M1.6 1 L4.6 4 L1.6 7" fill="none" stroke="#505050" stroke-width="0.95" stroke-linecap="round" stroke-linejoin="round"/></svg>
<svg style="left:82.30px;top:339.64px;" width="11.00" height="9.00" viewBox="0 0 11 9"><rect x="0.5" y="0.5" width="10" height="8" rx="0.8" fill="#fff" stroke="#3d7cc4" stroke-width="1"/><rect x="0.5" y="0.5" width="10" height="1.7" fill="#3d7cc4"/><path d="M0.5 5.4 H10.5 M5.5 2.2 V8.5" stroke="#3d7cc4" stroke-width="0.8"/></svg>
<div class="t k" style="left:96.30px;transform-origin:0 50%;top:337.04px;font-size:10.10px;color:#161616;transform:scaleX(1.0621);">us_gaz</div>
<div style="left:228.50px;top:338.54px;width:39.50px;height:11.20px;background:#f4f4f4;"></div>
<div class="t k" style="right:936.70px;transform-origin:100% 50%;top:337.04px;font-size:10.10px;color:#161616;transform:scaleX(1.0338);">152K</div>
<div style="left:63.15px;top:351.29px;width:2.10px;height:14.29px;background:#c8f8b6;"></div>
<svg style="left:68.40px;top:354.13px;" width="6.00" height="8.00" viewBox="0 0 6 8"><path d="M1.6 1 L4.6 4 L1.6 7" fill="none" stroke="#505050" stroke-width="0.95" stroke-linecap="round" stroke-linejoin="round"/></svg>
<svg style="left:82.30px;top:353.93px;" width="11.00" height="9.00" viewBox="0 0 11 9"><rect x="0.5" y="0.5" width="10" height="8" rx="0.8" fill="#fff" stroke="#3d7cc4" stroke-width="1"/><rect x="0.5" y="0.5" width="10" height="1.7" fill="#3d7cc4"/><path d="M0.5 5.4 H10.5 M5.5 2.2 V8.5" stroke="#3d7cc4" stroke-width="0.8"/></svg>
<div class="t k" style="left:96.30px;transform-origin:0 50%;top:351.33px;font-size:10.10px;color:#161616;transform:scaleX(1.0606);">us_lex</div>
<div style="left:228.50px;top:352.83px;width:39.50px;height:11.20px;background:#f4f4f4;"></div>
<div class="t k" style="right:936.70px;transform-origin:100% 50%;top:351.33px;font-size:10.10px;color:#161616;transform:scaleX(1.0743);">296K</div>
<div style="left:63.15px;top:365.57px;width:2.10px;height:14.29px;background:#c8f8b6;"></div>
<svg style="left:68.40px;top:368.41px;" width="6.00" height="8.00" viewBox="0 0 6 8"><path d="M1.6 1 L4.6 4 L1.6 7" fill="none" stroke="#505050" stroke-width="0.95" stroke-linecap="round" stroke-linejoin="round"/></svg>
<svg style="left:82.30px;top:368.21px;" width="11.00" height="9.00" viewBox="0 0 11 9"><rect x="0.5" y="0.5" width="10" height="8" rx="0.8" fill="#fff" stroke="#3d7cc4" stroke-width="1"/><rect x="0.5" y="0.5" width="10" height="1.7" fill="#3d7cc4"/><path d="M0.5 5.4 H10.5 M5.5 2.2 V8.5" stroke="#3d7cc4" stroke-width="0.8"/></svg>
<div class="t k" style="left:96.30px;transform-origin:0 50%;top:365.61px;font-size:10.10px;color:#161616;transform:scaleX(1.0640);">us_rules</div>
<div style="left:228.50px;top:367.11px;width:39.50px;height:11.20px;background:#f4f4f4;"></div>
<div class="t k" style="right:936.70px;transform-origin:100% 50%;top:365.61px;font-size:10.10px;color:#161616;transform:scaleX(1.0743);">448K</div>
<div style="left:52.70px;top:379.86px;width:2.10px;height:14.29px;background:#c8f8b6;"></div>
<svg style="left:57.95px;top:382.70px;" width="6.00" height="8.00" viewBox="0 0 6 8"><path d="M1.6 1 L4.6 4 L1.6 7" fill="none" stroke="#505050" stroke-width="0.95" stroke-linecap="round" stroke-linejoin="round"/></svg>
<svg style="left:71.85px;top:382.20px;" width="11.00" height="9.40" viewBox="0 0 11 9.4"><path d="M0 0.6 Q0 0 0.6 0 H4 L5 1.5 H10.4 Q11 1.5 11 2.1 V8.6 Q11 9.2 10.4 9.2 H0.6 Q0 9.2 0 8.6 Z" fill="#e8873a"/><circle cx="4.2" cy="5.6" r="1.9" fill="none" stroke="#fff" stroke-width="0.9"/><circle cx="7.2" cy="5.6" r="1.9" fill="none" stroke="#fff" stroke-width="0.9"/></svg>
<div class="t k" style="left:85.85px;transform-origin:0 50%;top:379.90px;font-size:10.10px;color:#161616;transform:scaleX(1.0508);">Foreign Tables</div>
<div style="left:52.70px;top:394.14px;width:2.10px;height:14.29px;background:#c8f8b6;"></div>
<svg style="left:57.95px;top:396.99px;" width="6.00" height="8.00" viewBox="0 0 6 8"><path d="M1.6 1 L4.6 4 L1.6 7" fill="none" stroke="#505050" stroke-width="0.95" stroke-linecap="round" stroke-linejoin="round"/></svg>
<svg style="left:71.85px;top:396.49px;" width="11.00" height="9.40" viewBox="0 0 11 9.4"><path d="M0 0.6 Q0 0 0.6 0 H4 L5 1.5 H10.4 Q11 1.5 11 2.1 V8.6 Q11 9.2 10.4 9.2 H0.6 Q0 9.2 0 8.6 Z" fill="#e8873a"/><path d="M2 5.6 Q5.6 2.4 9.2 5.6 Q5.6 8.6 2 5.6 Z" fill="none" stroke="#fff" stroke-width="0.9"/><circle cx="5.6" cy="5.6" r="1.1" fill="#fff"/></svg>
<div class="t k" style="left:85.85px;transform-origin:0 50%;top:394.19px;font-size:10.10px;color:#161616;transform:scaleX(1.0462);">Views</div>
<div style="left:52.70px;top:408.43px;width:2.10px;height:14.29px;background:#c8f8b6;"></div>
<svg style="left:57.95px;top:411.27px;" width="6.00" height="8.00" viewBox="0 0 6 8"><path d="M1.6 1 L4.6 4 L1.6 7" fill="none" stroke="#505050" stroke-width="0.95" stroke-linecap="round" stroke-linejoin="round"/></svg>
<svg style="left:71.85px;top:410.77px;" width="11.00" height="9.40" viewBox="0 0 11 9.4"><path d="M0 0.6 Q0 0 0.6 0 H4 L5 1.5 H10.4 Q11 1.5 11 2.1 V8.6 Q11 9.2 10.4 9.2 H0.6 Q0 9.2 0 8.6 Z" fill="#e8873a"/><path d="M2 5.6 Q5.6 2.4 9.2 5.6 Q5.6 8.6 2 5.6 Z" fill="none" stroke="#fff" stroke-width="0.9"/><circle cx="5.6" cy="5.6" r="1.1" fill="#fff"/></svg>
<div class="t k" style="left:85.85px;transform-origin:0 50%;top:408.47px;font-size:10.10px;color:#161616;transform:scaleX(1.0518);">Materialized Views</div>
<div style="left:52.70px;top:422.71px;width:2.10px;height:14.29px;background:#c8f8b6;"></div>
<svg style="left:57.95px;top:425.56px;" width="6.00" height="8.00" viewBox="0 0 6 8"><path d="M1.6 1 L4.6 4 L1.6 7" fill="none" stroke="#505050" stroke-width="0.95" stroke-linecap="round" stroke-linejoin="round"/></svg>
<svg style="left:71.85px;top:425.06px;" width="11.00" height="9.40" viewBox="0 0 11 9.4"><path d="M0 0.6 Q0 0 0.6 0 H4 L5 1.5 H10.4 Q11 1.5 11 2.1 V8.6 Q11 9.2 10.4 9.2 H0.6 Q0 9.2 0 8.6 Z" fill="#e8873a"/></svg>
<div class="t k" style="left:85.85px;transform-origin:0 50%;top:422.76px;font-size:10.10px;color:#161616;transform:scaleX(1.0659);">Indexes</div>
<div style="left:52.70px;top:437.00px;width:2.10px;height:14.29px;background:#c8f8b6;"></div>
<svg style="left:57.95px;top:439.84px;" width="6.00" height="8.00" viewBox="0 0 6 8"><path d="M1.6 1 L4.6 4 L1.6 7" fill="none" stroke="#505050" stroke-width="0.95" stroke-linecap="round" stroke-linejoin="round"/></svg>
<svg style="left:71.85px;top:439.34px;" width="11.00" height="9.40" viewBox="0 0 11 9.4"><path d="M0 0.6 Q0 0 0.6 0 H4 L5 1.5 H10.4 Q11 1.5 11 2.1 V8.6 Q11 9.2 10.4 9.2 H0.6 Q0 9.2 0 8.6 Z" fill="#e8873a"/></svg>
<div class="t k" style="left:85.85px;transform-origin:0 50%;top:437.04px;font-size:10.10px;color:#161616;transform:scaleX(1.0588);">Functions</div>
<div style="left:52.70px;top:451.29px;width:2.10px;height:14.29px;background:#c8f8b6;"></div>
<svg style="left:57.95px;top:454.13px;" width="6.00" height="8.00" viewBox="0 0 6 8"><path d="M1.6 1 L4.6 4 L1.6 7" fill="none" stroke="#505050" stroke-width="0.95" stroke-linecap="round" stroke-linejoin="round"/></svg>
<svg style="left:71.85px;top:453.63px;" width="11.00" height="9.40" viewBox="0 0 11 9.4"><path d="M0 0.6 Q0 0 0.6 0 H4 L5 1.5 H10.4 Q11 1.5 11 2.1 V8.6 Q11 9.2 10.4 9.2 H0.6 Q0 9.2 0 8.6 Z" fill="#e8873a"/></svg>
<div class="t k" style="left:85.85px;transform-origin:0 50%;top:451.33px;font-size:10.10px;color:#161616;transform:scaleX(1.0597);">Sequences</div>
<div style="left:52.70px;top:465.57px;width:2.10px;height:14.29px;background:#c8f8b6;"></div>
<svg style="left:57.95px;top:468.41px;" width="6.00" height="8.00" viewBox="0 0 6 8"><path d="M1.6 1 L4.6 4 L1.6 7" fill="none" stroke="#505050" stroke-width="0.95" stroke-linecap="round" stroke-linejoin="round"/></svg>
<svg style="left:71.85px;top:467.91px;" width="11.00" height="9.40" viewBox="0 0 11 9.4"><path d="M0 0.6 Q0 0 0.6 0 H4 L5 1.5 H10.4 Q11 1.5 11 2.1 V8.6 Q11 9.2 10.4 9.2 H0.6 Q0 9.2 0 8.6 Z" fill="#e8873a"/></svg>
<div class="t k" style="left:85.85px;transform-origin:0 50%;top:465.61px;font-size:10.10px;color:#161616;transform:scaleX(1.0533);">Data types</div>
<div style="left:52.70px;top:479.86px;width:2.10px;height:14.29px;background:#c8f8b6;"></div>
<svg style="left:57.95px;top:482.70px;" width="6.00" height="8.00" viewBox="0 0 6 8"><path d="M1.6 1 L4.6 4 L1.6 7" fill="none" stroke="#505050" stroke-width="0.95" stroke-linecap="round" stroke-linejoin="round"/></svg>
<svg style="left:71.85px;top:482.20px;" width="11.00" height="9.40" viewBox="0 0 11 9.4"><path d="M0 0.6 Q0 0 0.6 0 H4 L5 1.5 H10.4 Q11 1.5 11 2.1 V8.6 Q11 9.2 10.4 9.2 H0.6 Q0 9.2 0 8.6 Z" fill="#e8873a"/></svg>
<div class="t k" style="left:85.85px;transform-origin:0 50%;top:479.90px;font-size:10.10px;color:#161616;transform:scaleX(1.0640);">Aggregate functions</div>
<div style="left:31.80px;top:494.14px;width:2.10px;height:14.29px;background:#c8f8b6;"></div>
<svg style="left:37.05px;top:496.99px;" width="6.00" height="8.00" viewBox="0 0 6 8"><path d="M1.6 1 L4.6 4 L1.6 7" fill="none" stroke="#505050" stroke-width="0.95" stroke-linecap="round" stroke-linejoin="round"/></svg>
<svg style="left:50.95px;top:496.49px;" width="11.00" height="9.40" viewBox="0 0 11 9.4"><path d="M0 0.6 Q0 0 0.6 0 H4 L5 1.5 H10.4 Q11 1.5 11 2.1 V8.6 Q11 9.2 10.4 9.2 H0.6 Q0 9.2 0 8.6 Z" fill="#e8873a"/></svg>
<div class="t k" style="left:64.95px;transform-origin:0 50%;top:494.19px;font-size:10.10px;color:#161616;transform:scaleX(1.0492);">Event Triggers</div>
<div style="left:31.80px;top:508.43px;width:2.10px;height:14.29px;background:#c8f8b6;"></div>
<svg style="left:37.05px;top:511.27px;" width="6.00" height="8.00" viewBox="0 0 6 8"><path d="M1.6 1 L4.6 4 L1.6 7" fill="none" stroke="#505050" stroke-width="0.95" stroke-linecap="round" stroke-linejoin="round"/></svg>
<svg style="left:50.95px;top:510.77px;" width="11.00" height="9.40" viewBox="0 0 11 9.4"><path d="M0 0.6 Q0 0 0.6 0 H4 L5 1.5 H10.4 Q11 1.5 11 2.1 V8.6 Q11 9.2 10.4 9.2 H0.6 Q0 9.2 0 8.6 Z" fill="#e8873a"/><path d="M2.5 5.6 H6" stroke="#fff" stroke-width="1.1"/><circle cx="7.2" cy="5.6" r="1.4" fill="none" stroke="#fff" stroke-width="1"/><rect x="2" y="4.4" width="1.4" height="2.4" fill="#fff"/></svg>
<div class="t k" style="left:64.95px;transform-origin:0 50%;top:508.47px;font-size:10.10px;color:#161616;transform:scaleX(1.0593);">Extensions</div>
<div style="left:31.80px;top:522.71px;width:2.10px;height:14.29px;background:#c8f8b6;"></div>
<svg style="left:37.05px;top:525.56px;" width="6.00" height="8.00" viewBox="0 0 6 8"><path d="M1.6 1 L4.6 4 L1.6 7" fill="none" stroke="#505050" stroke-width="0.95" stroke-linecap="round" stroke-linejoin="round"/></svg>
<svg style="left:50.95px;top:525.06px;" width="11.00" height="9.40" viewBox="0 0 11 9.4"><path d="M0 0.6 Q0 0 0.6 0 H4 L5 1.5 H10.4 Q11 1.5 11 2.1 V8.6 Q11 9.2 10.4 9.2 H0.6 Q0 9.2 0 8.6 Z" fill="#e8873a"/><rect x="2.3" y="3.2" width="1.3" height="1.2" fill="#fff"/><rect x="2.3" y="5" width="1.3" height="3" fill="#fff"/></svg>
<div class="t k" style="left:64.95px;transform-origin:0 50%;top:522.76px;font-size:10.10px;color:#161616;transform:scaleX(1.0531);">Storage</div>
<div style="left:31.80px;top:537.00px;width:2.10px;height:14.29px;background:#c8f8b6;"></div>
<svg style="left:37.05px;top:539.84px;" width="6.00" height="8.00" viewBox="0 0 6 8"><path d="M1.6 1 L4.6 4 L1.6 7" fill="none" stroke="#505050" stroke-width="0.95" stroke-linecap="round" stroke-linejoin="round"/></svg>
<svg style="left:50.95px;top:539.34px;" width="11.00" height="9.40" viewBox="0 0 11 9.4"><path d="M0 0.6 Q0 0 0.6 0 H4 L5 1.5 H10.4 Q11 1.5 11 2.1 V8.6 Q11 9.2 10.4 9.2 H0.6 Q0 9.2 0 8.6 Z" fill="#e8873a"/><rect x="2.3" y="3.2" width="1.3" height="1.2" fill="#fff"/><rect x="2.3" y="5" width="1.3" height="3" fill="#fff"/></svg>
<div class="t k" style="left:64.95px;transform-origin:0 50%;top:537.04px;font-size:10.10px;color:#161616;transform:scaleX(1.0505);">System Info</div>
<div style="left:31.80px;top:551.29px;width:2.10px;height:14.29px;background:#c8f8b6;"></div>
<svg style="left:37.05px;top:554.13px;" width="6.00" height="8.00" viewBox="0 0 6 8"><path d="M1.6 1 L4.6 4 L1.6 7" fill="none" stroke="#505050" stroke-width="0.95" stroke-linecap="round" stroke-linejoin="round"/></svg>
<svg style="left:50.95px;top:553.63px;" width="11.00" height="9.40" viewBox="0 0 11 9.4"><path d="M0 0.6 Q0 0 0.6 0 H4 L5 1.5 H10.4 Q11 1.5 11 2.1 V8.6 Q11 9.2 10.4 9.2 H0.6 Q0 9.2 0 8.6 Z" fill="#e8873a"/><circle cx="5" cy="4.4" r="1.4" fill="#fff"/><path d="M2.4 8.6 Q2.4 6.2 5 6.2 Q7.6 6.2 7.6 8.6 Z" fill="#fff"/></svg>
<div class="t k" style="left:64.95px;transform-origin:0 50%;top:551.33px;font-size:10.10px;color:#161616;transform:scaleX(1.0425);">Roles</div>
<div style="left:10.90px;top:565.57px;width:2.10px;height:14.29px;background:#c8f8b6;"></div>
<svg style="left:16.15px;top:568.41px;" width="6.00" height="8.00" viewBox="0 0 6 8"><path d="M1.6 1 L4.6 4 L1.6 7" fill="none" stroke="#505050" stroke-width="0.95" stroke-linecap="round" stroke-linejoin="round"/></svg>
<svg style="left:30.05px;top:567.91px;" width="11.00" height="9.40" viewBox="0 0 11 9.4"><path d="M0 0.6 Q0 0 0.6 0 H4 L5 1.5 H10.4 Q11 1.5 11 2.1 V8.6 Q11 9.2 10.4 9.2 H0.6 Q0 9.2 0 8.6 Z" fill="#e8873a"/><path d="M2.5 5.6 H6" stroke="#fff" stroke-width="1.1"/><circle cx="7.2" cy="5.6" r="1.4" fill="none" stroke="#fff" stroke-width="1"/><rect x="2" y="4.4" width="1.4" height="2.4" fill="#fff"/></svg>
<div class="t k" style="left:44.05px;transform-origin:0 50%;top:565.61px;font-size:10.10px;color:#161616;transform:scaleX(1.0588);">Administer</div>
<div style="left:10.90px;top:579.86px;width:2.10px;height:14.29px;background:#c8f8b6;"></div>
<svg style="left:16.15px;top:582.70px;" width="6.00" height="8.00" viewBox="0 0 6 8"><path d="M1.6 1 L4.6 4 L1.6 7" fill="none" stroke="#505050" stroke-width="0.95" stroke-linecap="round" stroke-linejoin="round"/></svg>
<svg style="left:30.05px;top:582.20px;" width="11.00" height="9.40" viewBox="0 0 11 9.4"><path d="M0 0.6 Q0 0 0.6 0 H4 L5 1.5 H10.4 Q11 1.5 11 2.1 V8.6 Q11 9.2 10.4 9.2 H0.6 Q0 9.2 0 8.6 Z" fill="#e8873a"/><rect x="2.3" y="3.2" width="1.3" height="1.2" fill="#fff"/><rect x="2.3" y="5" width="1.3" height="3" fill="#fff"/></svg>
<div class="t k" style="left:44.05px;transform-origin:0 50%;top:579.90px;font-size:10.10px;color:#161616;transform:scaleX(1.0505);">System Info</div>
<svg style="left:260.40px;top:96.69px;" width="7.20" height="7.60" viewBox="0 0 7.2 7.6"><path d="M0.5 7 V3.6 A3.1 3.1 0 0 1 6.7 3.6 V7 Z" fill="#e6f0fb" stroke="#6aa0dc" stroke-width="0.9"/><path d="M2.5 6.6 V4.4 Q2.5 3.3 3.6 3.3 Q4.7 3.3 4.7 4.4 V6.6 Z" fill="#3d8ad8"/></svg>
<div style="left:274.80px;top:25.00px;width:210.20px;height:19.60px;background:#ccffbb;"></div>
<div style="left:485.00px;top:25.00px;width:140.20px;height:19.60px;background:#fff;"></div>
<div style="left:485.00px;top:25.00px;width:140.20px;height:1.10px;background:#ccffbb;"></div>
<div style="left:625.20px;top:25.00px;width:575.60px;height:19.60px;background:#f7f7f7;"></div>
<div style="left:274.80px;top:44.50px;width:926.00px;height:4.20px;background:#ccffbb;"></div>
<div style="left:274.80px;top:44.00px;width:210.20px;height:0.80px;background:#dcf8d0;"></div>
<svg style="left:280.50px;top:29.80px;" width="10.20" height="12.20" viewBox="0 0 10.2 12.2"><path d="M0.6 0.6 H6.4 L9.6 3.8 V11.6 H0.6 Z" fill="#eaf4fe" stroke="#3d7cc4" stroke-width="0.9"/><path d="M2.8 4.2 H4 M2.8 6.4 H4 M2.8 8.6 H4 M5.6 4.2 H6.8 M5.6 6.4 H6.8 M5.6 8.6 H6.8" stroke="#3d7cc4" stroke-width="1"/></svg>
<div class="t " style="left:295.30px;transform-origin:0 50%;top:28.40px;font-size:10.10px;color:#1c1c1c;transform:scaleX(1.0753);">*bookings</div>
<svg style="left:367.20px;top:31.10px;" width="11.00" height="9.00" viewBox="0 0 11 9"><rect x="0.5" y="0.5" width="10" height="8" rx="0.8" fill="#fff" stroke="#3d7cc4" stroke-width="1"/><rect x="0.5" y="0.5" width="10" height="1.7" fill="#3d7cc4"/><path d="M0.5 5.4 H10.5 M5.5 2.2 V8.5" stroke="#3d7cc4" stroke-width="0.8"/></svg>
<div class="t " style="left:382.50px;transform-origin:0 50%;top:28.40px;font-size:10.10px;color:#1c1c1c;transform:scaleX(1.0685);">boarding_passes</div>
<svg style="left:489.00px;top:29.40px;" width="11.00" height="12.00" viewBox="0 0 11 12"><path d="M3 0.6 H9.6 Q8.6 0.9 8.6 2 V9.4 Q8.6 10.8 7.2 10.8 H1.6 Q0.5 10.8 0.5 9.2 H6.2" fill="#e6f0fb" stroke="#4a80c4" stroke-width="0.9" stroke-linejoin="round"/><path d="M3 0.6 Q2.4 0.9 2.4 2 V9.2" fill="none" stroke="#4a80c4" stroke-width="0.9"/><path d="M0.9 10 H6.4" stroke="#4a80c4" stroke-width="1.3"/><rect x="6.2" y="7" width="5" height="5" rx="0.6" fill="#3aa845"/><path d="M7.2 9.4 L8.4 10.6 L10.4 8" stroke="#fff" stroke-width="0.9" fill="none"/></svg>
<div class="t " style="left:505.00px;transform-origin:0 50%;top:28.40px;font-size:10.10px;color:#1c1c1c;transform:scaleX(1.0937);">*&lt;postgres&gt; Script-1</div>
<svg style="left:610.50px;top:30.80px;" width="9.00" height="9.00" viewBox="0 0 9 9"><path d="M1 1 L8 8 M8 1 L1 8" stroke="#2a2a2a" stroke-width="1.05"/></svg>
<svg style="left:1169.00px;top:30.60px;" width="8.60" height="3.40" viewBox="0 0 8.6 3.4"><rect x="0.5" y="0.5" width="7.6" height="2.4" rx="0.8" fill="#fff" stroke="#444" stroke-width="0.9"/></svg>
<svg style="left:1186.00px;top:30.20px;" width="8.60" height="8.60" viewBox="0 0 8.6 8.6"><rect x="0.5" y="0.5" width="7.6" height="7.6" rx="0.6" fill="#fff" stroke="#444" stroke-width="0.9"/><rect x="0.5" y="0.5" width="7.6" height="2" fill="#999" stroke="#444" stroke-width="0.6"/></svg>
<div style="left:274.80px;top:48.70px;width:21.00px;height:196.00px;background:#ccffbb;"></div>
<div style="left:295.50px;top:48.70px;width:905.30px;height:196.30px;background:#fff;"></div>
<div style="left:295.50px;top:48.70px;width:9.60px;height:196.30px;background:#fbfbfb;"></div>
<div style="left:305.10px;top:48.70px;width:6.60px;height:22.30px;background:#e8d9ec;"></div>
<div style="left:305.10px;top:71.00px;width:6.60px;height:132.50px;background:#e4e3f1;"></div>
<div style="left:330.70px;top:71.00px;width:869.30px;height:10.80px;background:#e8f0fc;"></div>
<svg style="left:319.50px;top:50.20px;" width="8.40" height="8.40" viewBox="0 0 8.4 8.4"><circle cx="4.2" cy="4.2" r="3.5" fill="#f4f6fa" stroke="#9aa6b8" stroke-width="0.8"/><path d="M2.4 4.2 H6" stroke="#7a8698" stroke-width="0.9"/></svg>
<svg style="left:282.60px;top:52.60px;" width="6.00" height="7.20" viewBox="0 0 6 7.2"><path d="M0.4 0.2 L5.6 3.6 L0.4 7 Z" fill="#ee7d31"/></svg>
<svg style="left:282.60px;top:69.60px;" width="9.00" height="9.00" viewBox="0 0 9 9"><path d="M0.4 0.2 L5.6 3.6 L0.4 7 Z" fill="#ee7d31"/><path d="M6.6 5 V8.4 M4.9 6.7 H8.3" stroke="#4a80c4" stroke-width="1.1"/></svg>
<svg style="left:280.00px;top:84.80px;" width="11.00" height="12.00" viewBox="0 0 11 12"><path d="M3 0.6 H9.6 Q8.6 0.9 8.6 2 V9.4 Q8.6 10.8 7.2 10.8 H1.6 Q0.5 10.8 0.5 9.2 H6.2" fill="#e6f0fb" stroke="#3d7cc4" stroke-width="0.9" stroke-linejoin="round"/><path d="M3 0.6 Q2.4 0.9 2.4 2 V9.2" fill="none" stroke="#3d7cc4" stroke-width="0.9"/><path d="M0.9 10 H6.4" stroke="#3d7cc4" stroke-width="1.3"/><path d="M4 3.6 L6.6 5.4 L4 7.2 Z" fill="#ee7d31"/></svg>
<svg style="left:280.00px;top:102.20px;" width="11.00" height="12.00" viewBox="0 0 11 12"><path d="M3 0.6 H9.6 Q8.6 0.9 8.6 2 V9.4 Q8.6 10.8 7.2 10.8 H1.6 Q0.5 10.8 0.5 9.2 H6.2" fill="#e6f0fb" stroke="#3d7cc4" stroke-width="0.9" stroke-linejoin="round"/><path d="M3 0.6 Q2.4 0.9 2.4 2 V9.2" fill="none" stroke="#3d7cc4" stroke-width="0.9"/><path d="M0.9 10 H6.4" stroke="#3d7cc4" stroke-width="1.3"/><path d="M3.6 3.4 H7 M3.6 5.4 H7 M3.6 7.4 H7" stroke="#3d7cc4" stroke-width="0.8" stroke-dasharray="1.2 0.6"/><path d="M0.6 10.6 H7" stroke="#2f6fc0" stroke-width="1.4"/></svg>
<div class="t " style="left:280.60px;transform-origin:0 50%;top:118.10px;font-size:11.00px;color:#2468bc;transform:scaleX(1.0680);-webkit-text-stroke:0.25px #2468bc;">AI</div>
<svg style="left:279.80px;top:138.50px;" width="11.40" height="10.00" viewBox="0 0 11.4 10"><path d="M0.6 9.4 V0.6 H4 L5 2 H10.8 V9.4 Z" fill="#eaf4fe" stroke="#3d7cc4" stroke-width="0.9"/><path d="M2.6 4 L4.4 5.6 L2.6 7.2 M5.4 7.4 H8" stroke="#3d7cc4" stroke-width="0.9" fill="none"/></svg>
<svg style="left:279.60px;top:156.00px;" width="12.00" height="12.00" viewBox="0 0 12 12"><path d="M11.51 7.46 L10.93 8.86 L9.37 8.33 L8.33 9.37 L8.86 10.93 L7.46 11.51 L6.74 10.03 L5.26 10.03 L4.54 11.51 L3.14 10.93 L3.67 9.37 L2.63 8.33 L1.07 8.86 L0.49 7.46 L1.97 6.74 L1.97 5.26 L0.49 4.54 L1.07 3.14 L2.63 3.67 L3.67 2.63 L3.14 1.07 L4.54 0.49 L5.26 1.97 L6.74 1.97 L7.46 0.49 L8.86 1.07 L8.33 2.63 L9.37 3.67 L10.93 3.14 L11.51 4.54 L10.03 5.26 L10.03 6.74 Z" fill="none" stroke="#3d7cc4" stroke-width="0.85" stroke-linejoin="round"/><circle cx="6" cy="6" r="1.9" fill="none" stroke="#3d7cc4" stroke-width="0.85"/></svg>
<div style="left:279.60px;top:178.20px;width:1.50px;height:1.50px;background:#b8a39c;"></div>
<div style="left:282.85px;top:178.20px;width:1.50px;height:1.50px;background:#b8a39c;"></div>
<div style="left:286.10px;top:178.20px;width:1.50px;height:1.50px;background:#b8a39c;"></div>
<div style="left:289.35px;top:178.20px;width:1.50px;height:1.50px;background:#b8a39c;"></div>
<svg style="left:280.20px;top:189.50px;" width="11.00" height="12.40" viewBox="0 0 11 12.4"><path d="M0.6 0.6 H6 L9.4 4 V11.6 H0.6 Z" fill="none" stroke="#3d7cc4" stroke-width="0.9"/><path d="M6 0.6 V4 H9.4 Z" fill="#3d7cc4" stroke="#3d7cc4" stroke-width="0.5"/><path d="M2.4 7 H7.4 M5.8 5.4 L7.4 7 L5.8 8.6" stroke="#2f6fc0" stroke-width="0.9" fill="none"/></svg>
<svg style="left:280.20px;top:206.80px;" width="11.00" height="12.40" viewBox="0 0 11 12.4"><path d="M0.6 0.6 H6 L9.4 4 V11.6 H0.6 Z" fill="none" stroke="#3d7cc4" stroke-width="0.9"/><path d="M6 0.6 V4 H9.4 Z" fill="#3d7cc4" stroke="#3d7cc4" stroke-width="0.5"/><rect x="6.4" y="6.6" width="4.4" height="5.2" rx="0.9" fill="#c8332a"/><rect x="8" y="7.6" width="1.2" height="3.2" fill="#f0b0a8"/></svg>
<svg style="left:280.20px;top:224.50px;" width="11.00" height="12.40" viewBox="0 0 11 12.4"><path d="M0.6 0.6 H6 L9.4 4 V11.6 H0.6 Z" fill="none" stroke="#3d7cc4" stroke-width="0.9"/><path d="M6 0.6 V4 H9.4 Z" fill="#3d7cc4" stroke="#3d7cc4" stroke-width="0.5"/><path d="M3.6 5.6 H2.8 V9.8 H3.6 M6.4 5.6 H7.2 V9.8 H6.4" stroke="#3d7cc4" stroke-width="0.7" fill="none"/><rect x="4.3" y="7" width="1.4" height="1.4" fill="#3d7cc4"/></svg>
<svg style="left:280.20px;top:241.20px;" width="11.00" height="3.40" viewBox="0 0 11 3.4"><path d="M0.6 3.4 V1.2 Q0.6 0.6 1.4 0.6 H3" stroke="#3d7cc4" stroke-width="0.9" fill="none"/><path d="M5.4 1.6 H9.4" stroke="#3d7cc4" stroke-width="1"/></svg>
<div class="t m" style="left:330.70px;top:46.90px;font-size:9.50px;color:#222;"><span class="kw">SELECT</span></div>
<div class="t m" style="left:353.58px;top:57.98px;font-size:9.50px;color:#222;"><span class="al">b</span>.<span class="co">book_ref</span>,</div>
<div class="t m" style="left:353.58px;top:69.06px;font-size:9.50px;color:#222;"><span class="al">t</span>.<span class="co">ticket_no</span>,</div>
<div class="t m" style="left:353.58px;top:80.14px;font-size:9.50px;color:#222;"><span class="al">f</span>.<span class="co">flight_id</span>,</div>
<div class="t m" style="left:353.58px;top:91.22px;font-size:9.50px;color:#222;"><span class="al">f</span>.<span class="co">departure_airport</span>,</div>
<div class="t m" style="left:353.58px;top:102.30px;font-size:9.50px;color:#222;"><span class="al">f</span>.<span class="co">arrival_airport</span>,</div>
<div class="t m" style="left:353.58px;top:113.38px;font-size:9.50px;color:#222;"><span class="al">tf</span>.<span class="co">fare_conditions</span>,</div>
<div class="t m" style="left:353.58px;top:124.46px;font-size:9.50px;color:#222;"><span class="al">bp</span>.<span class="co">seat_no</span></div>
<div class="t m" style="left:330.70px;top:135.54px;font-size:9.50px;color:#222;"><span class="kw">FROM</span> <span class="tb">bookings</span> <span class="al">b</span></div>
<div class="t m" style="left:330.70px;top:146.62px;font-size:9.50px;color:#222;"><span class="kw">JOIN</span> <span class="tb">tickets</span> <span class="al">t</span> <span class="kw">ON</span> <span class="al">t</span>.<span class="co">book_ref</span> = <span class="al">b</span>.<span class="co">book_ref</span></div>
<div class="t m" style="left:330.70px;top:157.70px;font-size:9.50px;color:#222;"><span class="kw">JOIN</span> <span class="tb">ticket_flights</span> <span class="al">tf</span> <span class="kw">ON</span> <span class="al">tf</span>.<span class="co">ticket_no</span> = <span class="al">t</span>.<span class="co">ticket_no</span></div>
<div class="t m" style="left:330.70px;top:168.78px;font-size:9.50px;color:#222;"><span class="kw">JOIN</span> <span class="tb">flights</span> <span class="al">f</span> <span class="kw">ON</span> <span class="al">f</span>.<span class="co">flight_id</span> = <span class="al">tf</span>.<span class="co">flight_id</span></div>
<div class="t m" style="left:330.70px;top:179.86px;font-size:9.50px;color:#222;"><span class="kw">LEFT JOIN</span> <span class="tb">boarding_passes</span> <span class="al">bp</span> <span class="kw">ON</span> <span class="al">bp</span>.<span class="co">ticket_no</span> = <span class="al">t</span>.<span class="co">ticket_no</span> <span class="kw">AND</span> <span class="al">bp</span>.<span class="co">flight_id</span> = <span class="al">f</span>.<span class="co">flight_id</span></div>
<div class="t m" style="left:330.70px;top:190.94px;font-size:9.50px;color:#222;"><span class="kw">LIMIT</span> <span class="nu">100</span><span class="sc">;</span></div>
<div style="left:274.80px;top:245.00px;width:926.00px;height:6.00px;background:#fdfdfd;"></div>
<div style="left:274.80px;top:245.00px;width:926.00px;height:0.90px;background:#fdfdfd;"></div>
<div style="left:274.80px;top:247.60px;width:926.00px;height:0.90px;background:#c4cfe2;"></div>
<svg style="left:716.40px;top:244.80px;" width="43.60" height="5.80" viewBox="0 0 43.6 5.8"><rect x="0.5" y="0.5" width="42.6" height="4.8" rx="1.3" fill="#fcfdff" stroke="#aebcd6" stroke-width="0.8"/><path d="M7.4 4.6 L12.4 1.7 L17.4 4.6 Z M24.6 1.7 L29.8 4.6 L35 1.7 Z" fill="#8ea8d2"/></svg>
<div style="left:274.80px;top:250.60px;width:926.00px;height:412.40px;background:#ccffbb;border-radius:0 5px 0 0;"></div>
<div style="left:274.80px;top:250.90px;width:105.40px;height:16.80px;background:#ccffbb;border-top:1px solid #a6aca2;border-right:1px solid #a0a89a;border-radius:0 3px 0 0;box-sizing:border-box;"></div>
<div style="left:380.00px;top:266.80px;width:820.80px;height:0.90px;background:#a3b29c;"></div>
<svg style="left:279.00px;top:254.60px;" width="9.40" height="11.60" viewBox="0 0 9.4 11.6"><rect x="0.5" y="0.5" width="8.4" height="10.6" rx="0.8" fill="#e4f0fc" stroke="#3d7cc4" stroke-width="0.9"/><path d="M3.13 0.5 V11.0 M5.87 0.5 V11.0 M0.5 2.97 H8.8 M0.5 5.72 H8.8 M0.5 8.47 H8.8" stroke="#3d7cc4" stroke-width="0.8"/></svg>
<div class="t " style="left:294.60px;transform-origin:0 50%;top:253.20px;font-size:10.10px;color:#1c1c1c;transform:scaleX(1.0703);">bookings(+) 1</div>
<svg style="left:366.50px;top:256.20px;" width="9.00" height="9.00" viewBox="0 0 9 9"><path d="M1 1 L8 8 M8 1 L1 8" stroke="#2a2a2a" stroke-width="1.05"/></svg>
<div style="left:277.20px;top:270.30px;width:814.40px;height:18.90px;background:#fff;border:1px solid #c4cabf;border-radius:2px;box-sizing:border-box;"></div>
<svg style="left:281.00px;top:274.50px;" width="11.00" height="11.00" viewBox="0 0 11 11"><path d="M4 1.4 H10.4 M7.2 1.4 V9.8 M5.8 9.8 H8.6" stroke="#7a9ac8" stroke-width="0.9" fill="none"/><path d="M2 6.6 L3.6 8.2 L2 9.8 L0.4 8.2 Z" fill="none" stroke="#7a9ac8" stroke-width="0.7"/></svg>
<div class="t " style="left:295.00px;transform-origin:0 50%;top:272.60px;font-size:10.10px;color:#3b8a2e;transform:scaleX(1.0723);">SELECT b.book_ref, t.ticket_no, f.flight_id, f</div>
<div style="left:506.80px;top:274.60px;width:0.80px;height:11.00px;background:#9a9a9a;"></div>
<svg style="left:510.40px;top:274.40px;" width="12.00" height="11.00" viewBox="0 0 12 11"><path d="M1 3.6 V1 H3.6 M8.4 1 H11 V3.6 M11 7.4 V10 H8.4 M3.6 10 H1 V7.4" stroke="#555" stroke-width="0.8" fill="none" stroke-dasharray="1.6 0.8"/><path d="M1 1 L3.4 3.4 M11 1 L8.6 3.4 M11 10 L8.6 7.6 M1 10 L3.4 7.6" stroke="#555" stroke-width="0.7"/></svg>
<div class="t " style="left:526.80px;transform-origin:0 50%;top:272.60px;font-size:10.10px;color:#a6a6a6;transform:scaleX(1.0656);">Enter a SQL expression to filter results (use Ctrl+Space)</div>
<svg style="left:1060.50px;top:275.50px;" width="5.00" height="8.00" viewBox="0 0 5 8"><path d="M0.3 0.4 L4.6 4 L0.3 7.6 Z" fill="#777"/></svg>
<div style="left:1074.30px;top:274.40px;width:0.75px;height:11.40px;background:#8a8a8a;"></div>
<svg style="left:1078.60px;top:278.00px;" width="6.40" height="4.00" viewBox="0 0 6.4 4"><path d="M0 0 H6.4 L3.2 4 Z" fill="#666"/></svg>
<svg style="left:1098.50px;top:273.00px;" width="12.00" height="12.00" viewBox="0 0 12 12"><path d="M5.6 1 L10.4 5.2 L6.4 10 H3.6 L1 7.4 Z" fill="#fff" stroke="#2f6fc0" stroke-width="1"/><path d="M3.4 4.4 L7.8 8.4 L6.4 10 H3.6 L1 7.4 Z" fill="#2f6fc0"/><path d="M7.6 10.8 H10.6" stroke="#2f6fc0" stroke-width="0.9"/></svg>
<svg style="left:1112.88px;top:279.23px;" width="4.25" height="2.55" viewBox="0 0 5 3"><path d="M0 0 H5 L2.5 3 Z" fill="#222"/></svg>
<svg style="left:1121.50px;top:273.50px;" width="11.00" height="12.00" viewBox="0 0 11 12"><path d="M0.8 0.8 H10 L6.4 5.4 V10.6 L4.4 9.4 V5.4 Z" fill="#eaf4fe" stroke="#3d7cc4" stroke-width="0.9" stroke-linejoin="round"/></svg>
<svg style="left:1136.88px;top:279.23px;" width="4.25" height="2.55" viewBox="0 0 5 3"><path d="M0 0 H5 L2.5 3 Z" fill="#222"/></svg>
<svg style="left:1146.50px;top:274.60px;" width="11.00" height="9.00" viewBox="0 0 11 9"><path d="M4.6 0.8 L0.8 4.5 L4.6 8.2 V6.2 H10 V2.8 H4.6 Z" fill="none" stroke="#b4d4e4" stroke-width="0.9" stroke-linejoin="round"/></svg>
<svg style="left:1160.60px;top:278.40px;" width="4.00" height="2.40" viewBox="0 0 5 3"><path d="M0 0 H5 L2.5 3 Z" fill="#a8b8a8"/></svg>
<svg style="left:1169.50px;top:274.60px;" width="11.00" height="9.00" viewBox="0 0 11 9"><path d="M6.4 0.8 L10.2 4.5 L6.4 8.2 V6.2 H1 V2.8 H6.4 Z" fill="none" stroke="#b4d4e4" stroke-width="0.9" stroke-linejoin="round"/></svg>
<svg style="left:1184.40px;top:278.40px;" width="4.00" height="2.40" viewBox="0 0 5 3"><path d="M0 0 H5 L2.5 3 Z" fill="#a8b8a8"/></svg>
<div style="left:277.40px;top:292.00px;width:14.80px;height:44.80px;background:#c3f1b3;border:1px solid #a7c79c;box-sizing:border-box;border-radius:1px;"></div>
<div class="t" style="left:245.30px;top:299.20px;width:80px;text-align:center;font-size:10.50px;color:#1c1c1c;letter-spacing:0.20px;transform:rotate(-90deg);">Grid</div>
<svg style="left:279.50px;top:321.80px;" width="11.00" height="11.00" viewBox="0 0 11 11"><rect x="0.5" y="0.5" width="10.0" height="10.0" rx="0.8" fill="#e4f0fc" stroke="#3d7cc4" stroke-width="0.9"/><path d="M3.67 0.5 V10.4 M6.93 0.5 V10.4 M0.5 2.81 H10.4 M0.5 5.41 H10.4 M0.5 8.01 H10.4" stroke="#3d7cc4" stroke-width="0.8"/></svg>
<div class="t" style="left:245.30px;top:345.00px;width:80px;text-align:center;font-size:10.50px;color:#1c1c1c;letter-spacing:0.20px;transform:rotate(-90deg);">Text</div>
<svg style="left:279.20px;top:366.50px;" width="12.00" height="13.00" viewBox="0 0 12 13"><path d="M1 4.6 H10.4 M1 1 V8.2 M10.4 2.2 V7" stroke="#5a94d8" stroke-width="0.95" fill="none"/><path d="M7.4 8.2 L9.2 10 L7.4 11.8 L5.6 10 Z" fill="#eaf6e4" stroke="#5a94d8" stroke-width="0.7"/></svg>
<div class="t" style="left:245.30px;top:594.60px;width:80px;text-align:center;font-size:10.50px;color:#1c1c1c;letter-spacing:0.20px;transform:rotate(-90deg);">Record</div>
<svg style="left:279.60px;top:622.50px;" width="11.40" height="12.00" viewBox="0 0 11.4 12"><path d="M0.6 11.2 V4.4 L3 2.6 H8" fill="none" stroke="#3d7cc4" stroke-width="0.9"/><rect x="0.6" y="4.6" width="9" height="6.8" fill="#eef6ff" stroke="#3d7cc4" stroke-width="0.9"/><circle cx="8.6" cy="3" r="2.6" fill="#2f6fc0"/><path d="M7.4 3 H9.8" stroke="#fff" stroke-width="0.8"/></svg>
<svg style="left:1186.60px;top:296.60px;" width="10.20" height="11.40" viewBox="0 0 10.2 11.4"><rect x="0.5" y="0.5" width="9.2" height="10.4" rx="0.8" fill="#e4f0fc" stroke="#3d7cc4" stroke-width="0.9"/><path d="M3.40 0.5 V10.8 M6.40 0.5 V10.8 M0.5 2.92 H9.6 M0.5 5.62 H9.6 M0.5 8.32 H9.6" stroke="#3d7cc4" stroke-width="0.8"/></svg>
<svg style="left:1185.60px;top:303.50px;" width="6.60" height="6.60" viewBox="0 0 6.6 6.6"><circle cx="3.3" cy="3.3" r="2.4" fill="#ccffbb" stroke="#2f6fc0" stroke-width="0.9" stroke-dasharray="1.2 0.8"/></svg>
<div class="t" style="left:1151.80px;top:320.20px;width:80px;text-align:center;font-size:10.50px;color:#1c1c1c;letter-spacing:0.20px;transform:rotate(90deg);">Panels</div>
<svg style="left:1186.60px;top:354.00px;" width="10.00" height="10.00" viewBox="0 0 10 10"><rect x="0.5" y="0.5" width="3.6" height="3.6" fill="none" stroke="#3d7cc4" stroke-width="0.9"/><rect x="5.6" y="0.5" width="3.6" height="3.6" fill="none" stroke="#3d7cc4" stroke-width="0.9"/><rect x="0.5" y="5.6" width="3.6" height="3.6" fill="none" stroke="#3d7cc4" stroke-width="0.9"/><rect x="5.6" y="5.6" width="3.6" height="3.6" fill="#f6c8a0" stroke="#e8873a" stroke-width="0.9"/></svg>
<svg style="left:1186.00px;top:370.00px;" width="11.40" height="11.40" viewBox="0 0 11.4 11.4"><circle cx="5.7" cy="5.7" r="5" fill="#e8f4e4" stroke="#3d7cc4" stroke-width="0.9"/><rect x="3.4" y="3.6" width="1.4" height="1.4" fill="#3d7cc4"/><rect x="6.6" y="3.6" width="1.4" height="1.4" fill="#3d7cc4"/><rect x="3.4" y="6.6" width="1.4" height="1.4" fill="#3d7cc4"/><rect x="6.6" y="6.6" width="1.4" height="1.4" fill="#3d7cc4"/></svg>
<svg style="left:1186.40px;top:388.50px;" width="10.60" height="9.60" viewBox="0 0 10.6 9.6"><rect x="0.5" y="0.5" width="9.6" height="8.4" fill="#eef6ff" stroke="#3d7cc4" stroke-width="0.9"/><rect x="0.5" y="0.5" width="9.6" height="3.4" fill="#3d7cc4"/><path d="M2 1.4 H3.2 M4.6 1.4 H5.8 M7.2 1.4 H8.4 M3.2 2.8 H4.4 M5.8 2.8 H7" stroke="#fff" stroke-width="0.8"/></svg>
<svg style="left:1186.40px;top:404.50px;" width="10.60" height="12.40" viewBox="0 0 10.6 12.4"><rect x="0.5" y="3.6" width="9.6" height="8.2" fill="#eef6ff" stroke="#3d7cc4" stroke-width="0.9"/><path d="M0.5 6.4 H10 M0.5 9 H10 M3.8 3.6 V11.8 M7 3.6 V11.8" stroke="#3d7cc4" stroke-width="0.8"/><path d="M3.8 0 V12" stroke="#e8873a" stroke-width="1.2"/></svg>
<svg style="left:1186.40px;top:422.00px;" width="10.60" height="11.00" viewBox="0 0 10.6 11"><rect x="0.5" y="0.5" width="9.6" height="9.6" fill="#eef6ff" stroke="#3d7cc4" stroke-width="0.9"/><rect x="0.5" y="0.5" width="9.6" height="2.4" fill="#3d7cc4"/><rect x="0.5" y="5.6" width="5.4" height="4.6" fill="#2f6fc0"/><path d="M7 8.6 H9.4" stroke="#8aa" stroke-width="0.8" stroke-dasharray="0.8 0.6"/></svg>
<svg style="left:1186.40px;top:625.50px;" width="10.60" height="10.60" viewBox="0 0 10.6 10.6"><path d="M0.6 0.6 V10 H3.4 V0.6 Z" fill="none" stroke="#4a80c4" stroke-width="0.9"/><path d="M5.4 10 H9.8 V5.2 H5.4" fill="none" stroke="#4a80c4" stroke-width="0.9"/><path d="M6.8 3.4 L8.4 1.4 L10 3.4" fill="none" stroke="#4a80c4" stroke-width="0.8"/></svg>
<div style="left:294.00px;top:292.20px;width:887.80px;height:348.60px;background:#fff;"></div>
<div style="left:294.00px;top:292.20px;width:887.80px;height:21.80px;background:#ececec;"></div>
<div style="left:0.00px;top:314.00px;width:1204.00px;height:326.80px;overflow:hidden;">
<div style="left:326.00px;top:0.00px;width:824.20px;height:15.83px;background:#e2effc;"></div>
<div style="left:1150.20px;top:15.03px;width:31.60px;height:0.80px;background:#f3f3f3;"></div>
<div style="left:294.00px;top:0.00px;width:32.00px;height:15.83px;background:#d6e6f9;border-bottom:1.5px solid #9c9c9c;border-right:1.3px solid #8e8e8e;box-sizing:border-box;"></div>
<div class="t " style="left:297.60px;transform-origin:0 50%;top:1.22px;font-size:10.10px;color:#1c1c1c;transform:scaleX(0.9500);">1</div>
<div style="left:325.40px;top:0.00px;width:106.60px;height:15.13px;background:#bdd8fa;border:1.1px solid #46566c;border-left:1.7px solid #1c2430;box-sizing:border-box;"></div>
<div class="t " style="left:329.90px;transform-origin:0 50%;top:1.22px;font-size:10.10px;color:#1c1c1c;transform:scaleX(1.1325);">06B046</div>
<div class="t " style="left:437.00px;transform-origin:0 50%;top:1.22px;font-size:10.10px;color:#1c1c1c;transform:scaleX(1.1352);">0005432000987</div>
<div class="t " style="left:545.80px;transform-origin:0 50%;top:1.22px;font-size:10.10px;color:#1a1ae6;transform:scaleX(1.1071);">28,935</div>
<div class="t " style="left:648.80px;transform-origin:0 50%;top:1.22px;font-size:10.10px;color:#1c1c1c;transform:scaleX(0.9600);">CSY</div>
<div class="t " style="left:796.70px;transform-origin:0 50%;top:1.22px;font-size:10.10px;color:#1c1c1c;transform:scaleX(0.9600);">SVO</div>
<div class="t " style="left:926.70px;transform-origin:0 50%;top:1.22px;font-size:10.10px;color:#1c1c1c;transform:scaleX(1.0566);">Economy</div>
<div class="t " style="left:1058.70px;transform-origin:0 50%;top:1.22px;font-size:10.10px;color:#1c1c1c;transform:scaleX(1.0327);">7A</div>
<div style="left:326.00px;top:15.83px;width:824.20px;height:15.83px;background:#ffffff;"></div>
<div style="left:1150.20px;top:30.86px;width:31.60px;height:0.80px;background:#f3f3f3;"></div>
<div style="left:294.00px;top:15.83px;width:32.00px;height:15.83px;background:#ececec;border-bottom:1.5px solid #9c9c9c;border-right:1.3px solid #8e8e8e;box-sizing:border-box;"></div>
<div class="t " style="left:297.60px;transform-origin:0 50%;top:17.05px;font-size:10.10px;color:#1c1c1c;transform:scaleX(1.1200);">2</div>
<div class="t " style="left:329.90px;transform-origin:0 50%;top:17.05px;font-size:10.10px;color:#1c1c1c;transform:scaleX(1.1325);">06B046</div>
<div class="t " style="left:437.00px;transform-origin:0 50%;top:17.05px;font-size:10.10px;color:#1c1c1c;transform:scaleX(1.1352);">0005432000988</div>
<div class="t " style="left:545.80px;transform-origin:0 50%;top:17.05px;font-size:10.10px;color:#1a1ae6;transform:scaleX(1.1071);">28,935</div>
<div class="t " style="left:648.80px;transform-origin:0 50%;top:17.05px;font-size:10.10px;color:#1c1c1c;transform:scaleX(0.9600);">CSY</div>
<div class="t " style="left:796.70px;transform-origin:0 50%;top:17.05px;font-size:10.10px;color:#1c1c1c;transform:scaleX(0.9600);">SVO</div>
<div class="t " style="left:926.70px;transform-origin:0 50%;top:17.05px;font-size:10.10px;color:#1c1c1c;transform:scaleX(1.0566);">Economy</div>
<div class="t " style="left:1058.70px;transform-origin:0 50%;top:17.05px;font-size:10.10px;color:#1c1c1c;transform:scaleX(1.0069);">10E</div>
<div style="left:326.00px;top:31.66px;width:824.20px;height:15.83px;background:#ebf3fc;"></div>
<div style="left:1150.20px;top:46.69px;width:31.60px;height:0.80px;background:#f3f3f3;"></div>
<div style="left:294.00px;top:31.66px;width:32.00px;height:15.83px;background:#ececec;border-bottom:1.5px solid #9c9c9c;border-right:1.3px solid #8e8e8e;box-sizing:border-box;"></div>
<div class="t " style="left:297.60px;transform-origin:0 50%;top:32.88px;font-size:10.10px;color:#1c1c1c;transform:scaleX(1.1200);">3</div>
<div class="t " style="left:329.90px;transform-origin:0 50%;top:32.88px;font-size:10.10px;color:#1c1c1c;transform:scaleX(1.1316);">E170C3</div>
<div class="t " style="left:437.00px;transform-origin:0 50%;top:32.88px;font-size:10.10px;color:#1c1c1c;transform:scaleX(1.1352);">0005432000989</div>
<div class="t " style="left:545.80px;transform-origin:0 50%;top:32.88px;font-size:10.10px;color:#1a1ae6;transform:scaleX(1.1071);">28,939</div>
<div class="t " style="left:648.80px;transform-origin:0 50%;top:32.88px;font-size:10.10px;color:#1c1c1c;transform:scaleX(0.9600);">CSY</div>
<div class="t " style="left:796.70px;transform-origin:0 50%;top:32.88px;font-size:10.10px;color:#1c1c1c;transform:scaleX(0.9600);">SVO</div>
<div class="t " style="left:926.70px;transform-origin:0 50%;top:32.88px;font-size:10.10px;color:#1c1c1c;transform:scaleX(1.0566);">Economy</div>
<div class="t " style="left:1058.70px;transform-origin:0 50%;top:32.88px;font-size:10.10px;color:#1c1c1c;transform:scaleX(1.0069);">18E</div>
<div style="left:326.00px;top:47.49px;width:824.20px;height:15.83px;background:#ffffff;"></div>
<div style="left:1150.20px;top:62.52px;width:31.60px;height:0.80px;background:#f3f3f3;"></div>
<div style="left:294.00px;top:47.49px;width:32.00px;height:15.83px;background:#ececec;border-bottom:1.5px solid #9c9c9c;border-right:1.3px solid #8e8e8e;box-sizing:border-box;"></div>
<div class="t " style="left:297.60px;transform-origin:0 50%;top:48.71px;font-size:10.10px;color:#1c1c1c;transform:scaleX(1.1200);">4</div>
<div class="t " style="left:329.90px;transform-origin:0 50%;top:48.71px;font-size:10.10px;color:#1c1c1c;transform:scaleX(1.1316);">E170C3</div>
<div class="t " style="left:437.00px;transform-origin:0 50%;top:48.71px;font-size:10.10px;color:#1c1c1c;transform:scaleX(1.1352);">0005432000990</div>
<div class="t " style="left:545.80px;transform-origin:0 50%;top:48.71px;font-size:10.10px;color:#1a1ae6;transform:scaleX(1.1071);">28,939</div>
<div class="t " style="left:648.80px;transform-origin:0 50%;top:48.71px;font-size:10.10px;color:#1c1c1c;transform:scaleX(0.9600);">CSY</div>
<div class="t " style="left:796.70px;transform-origin:0 50%;top:48.71px;font-size:10.10px;color:#1c1c1c;transform:scaleX(0.9600);">SVO</div>
<div class="t " style="left:926.70px;transform-origin:0 50%;top:48.71px;font-size:10.10px;color:#1c1c1c;transform:scaleX(1.0561);">Business</div>
<div class="t " style="left:1058.70px;transform-origin:0 50%;top:48.71px;font-size:10.10px;color:#1c1c1c;transform:scaleX(1.0363);">3F</div>
<div style="left:326.00px;top:63.32px;width:824.20px;height:15.83px;background:#ebf3fc;"></div>
<div style="left:1150.20px;top:78.35px;width:31.60px;height:0.80px;background:#f3f3f3;"></div>
<div style="left:294.00px;top:63.32px;width:32.00px;height:15.83px;background:#ececec;border-bottom:1.5px solid #9c9c9c;border-right:1.3px solid #8e8e8e;box-sizing:border-box;"></div>
<div class="t " style="left:297.60px;transform-origin:0 50%;top:64.54px;font-size:10.10px;color:#1c1c1c;transform:scaleX(1.1200);">5</div>
<div class="t " style="left:329.90px;transform-origin:0 50%;top:64.54px;font-size:10.10px;color:#1c1c1c;transform:scaleX(1.1310);">F313DD</div>
<div class="t " style="left:437.00px;transform-origin:0 50%;top:64.54px;font-size:10.10px;color:#1c1c1c;transform:scaleX(1.1352);">0005432000991</div>
<div class="t " style="left:545.80px;transform-origin:0 50%;top:64.54px;font-size:10.10px;color:#1a1ae6;transform:scaleX(1.1071);">28,913</div>
<div class="t " style="left:648.80px;transform-origin:0 50%;top:64.54px;font-size:10.10px;color:#1c1c1c;transform:scaleX(0.9600);">CSY</div>
<div class="t " style="left:796.70px;transform-origin:0 50%;top:64.54px;font-size:10.10px;color:#1c1c1c;transform:scaleX(0.9600);">SVO</div>
<div class="t " style="left:926.70px;transform-origin:0 50%;top:64.54px;font-size:10.10px;color:#1c1c1c;transform:scaleX(1.0561);">Business</div>
<div class="t " style="left:1058.70px;transform-origin:0 50%;top:64.54px;font-size:10.10px;color:#1c1c1c;transform:scaleX(0.9556);">1D</div>
<div style="left:326.00px;top:79.15px;width:824.20px;height:15.83px;background:#ffffff;"></div>
<div style="left:1150.20px;top:94.18px;width:31.60px;height:0.80px;background:#f3f3f3;"></div>
<div style="left:294.00px;top:79.15px;width:32.00px;height:15.83px;background:#ececec;border-bottom:1.5px solid #9c9c9c;border-right:1.3px solid #8e8e8e;box-sizing:border-box;"></div>
<div class="t " style="left:297.60px;transform-origin:0 50%;top:80.37px;font-size:10.10px;color:#1c1c1c;transform:scaleX(1.1200);">6</div>
<div class="t " style="left:329.90px;transform-origin:0 50%;top:80.37px;font-size:10.10px;color:#1c1c1c;transform:scaleX(1.1310);">F313DD</div>
<div class="t " style="left:437.00px;transform-origin:0 50%;top:80.37px;font-size:10.10px;color:#1c1c1c;transform:scaleX(1.1352);">0005432000992</div>
<div class="t " style="left:545.80px;transform-origin:0 50%;top:80.37px;font-size:10.10px;color:#1a1ae6;transform:scaleX(1.1071);">28,913</div>
<div class="t " style="left:648.80px;transform-origin:0 50%;top:80.37px;font-size:10.10px;color:#1c1c1c;transform:scaleX(0.9600);">CSY</div>
<div class="t " style="left:796.70px;transform-origin:0 50%;top:80.37px;font-size:10.10px;color:#1c1c1c;transform:scaleX(0.9600);">SVO</div>
<div class="t " style="left:926.70px;transform-origin:0 50%;top:80.37px;font-size:10.10px;color:#1c1c1c;transform:scaleX(1.0566);">Economy</div>
<div class="t " style="left:1058.70px;transform-origin:0 50%;top:80.37px;font-size:10.10px;color:#1c1c1c;transform:scaleX(1.0363);">5F</div>
<div style="left:326.00px;top:94.98px;width:824.20px;height:15.83px;background:#ebf3fc;"></div>
<div style="left:1150.20px;top:110.01px;width:31.60px;height:0.80px;background:#f3f3f3;"></div>
<div style="left:294.00px;top:94.98px;width:32.00px;height:15.83px;background:#ececec;border-bottom:1.5px solid #9c9c9c;border-right:1.3px solid #8e8e8e;box-sizing:border-box;"></div>
<div class="t " style="left:297.60px;transform-origin:0 50%;top:96.20px;font-size:10.10px;color:#1c1c1c;transform:scaleX(1.1200);">7</div>
<div class="t " style="left:329.90px;transform-origin:0 50%;top:96.20px;font-size:10.10px;color:#1c1c1c;transform:scaleX(1.1310);">F313DD</div>
<div class="t " style="left:437.00px;transform-origin:0 50%;top:96.20px;font-size:10.10px;color:#1c1c1c;transform:scaleX(1.1352);">0005432000993</div>
<div class="t " style="left:545.80px;transform-origin:0 50%;top:96.20px;font-size:10.10px;color:#1a1ae6;transform:scaleX(1.1071);">28,913</div>
<div class="t " style="left:648.80px;transform-origin:0 50%;top:96.20px;font-size:10.10px;color:#1c1c1c;transform:scaleX(0.9600);">CSY</div>
<div class="t " style="left:796.70px;transform-origin:0 50%;top:96.20px;font-size:10.10px;color:#1c1c1c;transform:scaleX(0.9600);">SVO</div>
<div class="t " style="left:926.70px;transform-origin:0 50%;top:96.20px;font-size:10.10px;color:#1c1c1c;transform:scaleX(1.0566);">Economy</div>
<div class="t " style="left:1058.70px;transform-origin:0 50%;top:96.20px;font-size:10.10px;color:#1c1c1c;transform:scaleX(1.0069);">19E</div>
<div style="left:326.00px;top:110.81px;width:824.20px;height:15.83px;background:#ffffff;"></div>
<div style="left:1150.20px;top:125.84px;width:31.60px;height:0.80px;background:#f3f3f3;"></div>
<div style="left:294.00px;top:110.81px;width:32.00px;height:15.83px;background:#ececec;border-bottom:1.5px solid #9c9c9c;border-right:1.3px solid #8e8e8e;box-sizing:border-box;"></div>
<div class="t " style="left:297.60px;transform-origin:0 50%;top:112.03px;font-size:10.10px;color:#1c1c1c;transform:scaleX(1.1200);">8</div>
<div class="t " style="left:329.90px;transform-origin:0 50%;top:112.03px;font-size:10.10px;color:#1c1c1c;transform:scaleX(1.1292);">CCC5CB</div>
<div class="t " style="left:437.00px;transform-origin:0 50%;top:112.03px;font-size:10.10px;color:#1c1c1c;transform:scaleX(1.1352);">0005432000994</div>
<div class="t " style="left:545.80px;transform-origin:0 50%;top:112.03px;font-size:10.10px;color:#1a1ae6;transform:scaleX(1.1071);">28,912</div>
<div class="t " style="left:648.80px;transform-origin:0 50%;top:112.03px;font-size:10.10px;color:#1c1c1c;transform:scaleX(0.9600);">CSY</div>
<div class="t " style="left:796.70px;transform-origin:0 50%;top:112.03px;font-size:10.10px;color:#1c1c1c;transform:scaleX(0.9600);">SVO</div>
<div class="t " style="left:926.70px;transform-origin:0 50%;top:112.03px;font-size:10.10px;color:#1c1c1c;transform:scaleX(1.0566);">Economy</div>
<div class="t " style="left:1058.70px;transform-origin:0 50%;top:112.03px;font-size:10.10px;color:#1c1c1c;transform:scaleX(1.0363);">6F</div>
<div style="left:326.00px;top:126.64px;width:824.20px;height:15.83px;background:#ebf3fc;"></div>
<div style="left:1150.20px;top:141.67px;width:31.60px;height:0.80px;background:#f3f3f3;"></div>
<div style="left:294.00px;top:126.64px;width:32.00px;height:15.83px;background:#ececec;border-bottom:1.5px solid #9c9c9c;border-right:1.3px solid #8e8e8e;box-sizing:border-box;"></div>
<div class="t " style="left:297.60px;transform-origin:0 50%;top:127.86px;font-size:10.10px;color:#1c1c1c;transform:scaleX(1.1200);">9</div>
<div class="t " style="left:329.90px;transform-origin:0 50%;top:127.86px;font-size:10.10px;color:#1c1c1c;transform:scaleX(1.1292);">CCC5CB</div>
<div class="t " style="left:437.00px;transform-origin:0 50%;top:127.86px;font-size:10.10px;color:#1c1c1c;transform:scaleX(1.1352);">0005432000995</div>
<div class="t " style="left:545.80px;transform-origin:0 50%;top:127.86px;font-size:10.10px;color:#1a1ae6;transform:scaleX(1.1071);">28,912</div>
<div class="t " style="left:648.80px;transform-origin:0 50%;top:127.86px;font-size:10.10px;color:#1c1c1c;transform:scaleX(0.9600);">CSY</div>
<div class="t " style="left:796.70px;transform-origin:0 50%;top:127.86px;font-size:10.10px;color:#1c1c1c;transform:scaleX(0.9600);">SVO</div>
<div class="t " style="left:926.70px;transform-origin:0 50%;top:127.86px;font-size:10.10px;color:#1c1c1c;transform:scaleX(1.0566);">Economy</div>
<div class="t " style="left:1058.70px;transform-origin:0 50%;top:127.86px;font-size:10.10px;color:#1c1c1c;transform:scaleX(1.0069);">17A</div>
<div style="left:326.00px;top:142.47px;width:824.20px;height:15.83px;background:#ffffff;"></div>
<div style="left:1150.20px;top:157.50px;width:31.60px;height:0.80px;background:#f3f3f3;"></div>
<div style="left:294.00px;top:142.47px;width:32.00px;height:15.83px;background:#ececec;border-bottom:1.5px solid #9c9c9c;border-right:1.3px solid #8e8e8e;box-sizing:border-box;"></div>
<div class="t " style="left:297.60px;transform-origin:0 50%;top:143.69px;font-size:10.10px;color:#1c1c1c;transform:scaleX(1.0350);">10</div>
<div class="t " style="left:329.90px;transform-origin:0 50%;top:143.69px;font-size:10.10px;color:#1c1c1c;transform:scaleX(1.1316);">1FB1E4</div>
<div class="t " style="left:437.00px;transform-origin:0 50%;top:143.69px;font-size:10.10px;color:#1c1c1c;transform:scaleX(1.1352);">0005432000996</div>
<div class="t " style="left:545.80px;transform-origin:0 50%;top:143.69px;font-size:10.10px;color:#1a1ae6;transform:scaleX(1.1071);">28,929</div>
<div class="t " style="left:648.80px;transform-origin:0 50%;top:143.69px;font-size:10.10px;color:#1c1c1c;transform:scaleX(0.9600);">CSY</div>
<div class="t " style="left:796.70px;transform-origin:0 50%;top:143.69px;font-size:10.10px;color:#1c1c1c;transform:scaleX(0.9600);">SVO</div>
<div class="t " style="left:926.70px;transform-origin:0 50%;top:143.69px;font-size:10.10px;color:#1c1c1c;transform:scaleX(1.0566);">Economy</div>
<div class="t " style="left:1058.70px;transform-origin:0 50%;top:143.69px;font-size:10.10px;color:#1c1c1c;transform:scaleX(1.0069);">14A</div>
<div style="left:326.00px;top:158.30px;width:824.20px;height:15.83px;background:#ebf3fc;"></div>
<div style="left:1150.20px;top:173.33px;width:31.60px;height:0.80px;background:#f3f3f3;"></div>
<div style="left:294.00px;top:158.30px;width:32.00px;height:15.83px;background:#ececec;border-bottom:1.5px solid #9c9c9c;border-right:1.3px solid #8e8e8e;box-sizing:border-box;"></div>
<div class="t " style="left:297.60px;transform-origin:0 50%;top:159.52px;font-size:10.10px;color:#1c1c1c;transform:scaleX(0.9500);">11</div>
<div class="t " style="left:329.90px;transform-origin:0 50%;top:159.52px;font-size:10.10px;color:#1c1c1c;transform:scaleX(1.1304);">DE3EA6</div>
<div class="t " style="left:437.00px;transform-origin:0 50%;top:159.52px;font-size:10.10px;color:#1c1c1c;transform:scaleX(1.1352);">0005432000997</div>
<div class="t " style="left:545.80px;transform-origin:0 50%;top:159.52px;font-size:10.10px;color:#1a1ae6;transform:scaleX(1.1071);">28,904</div>
<div class="t " style="left:648.80px;transform-origin:0 50%;top:159.52px;font-size:10.10px;color:#1c1c1c;transform:scaleX(0.9600);">CSY</div>
<div class="t " style="left:796.70px;transform-origin:0 50%;top:159.52px;font-size:10.10px;color:#1c1c1c;transform:scaleX(0.9600);">SVO</div>
<div class="t " style="left:926.70px;transform-origin:0 50%;top:159.52px;font-size:10.10px;color:#1c1c1c;transform:scaleX(1.0566);">Economy</div>
<div class="t " style="left:1058.70px;transform-origin:0 50%;top:159.52px;font-size:10.10px;color:#1c1c1c;transform:scaleX(1.0084);">19F</div>
<div style="left:326.00px;top:174.13px;width:824.20px;height:15.83px;background:#ffffff;"></div>
<div style="left:1150.20px;top:189.16px;width:31.60px;height:0.80px;background:#f3f3f3;"></div>
<div style="left:294.00px;top:174.13px;width:32.00px;height:15.83px;background:#ececec;border-bottom:1.5px solid #9c9c9c;border-right:1.3px solid #8e8e8e;box-sizing:border-box;"></div>
<div class="t " style="left:297.60px;transform-origin:0 50%;top:175.35px;font-size:10.10px;color:#1c1c1c;transform:scaleX(1.0350);">12</div>
<div class="t " style="left:329.90px;transform-origin:0 50%;top:175.35px;font-size:10.10px;color:#1c1c1c;transform:scaleX(1.1316);">4B75D1</div>
<div class="t " style="left:437.00px;transform-origin:0 50%;top:175.35px;font-size:10.10px;color:#1c1c1c;transform:scaleX(1.1352);">0005432000998</div>
<div class="t " style="left:545.80px;transform-origin:0 50%;top:175.35px;font-size:10.10px;color:#1a1ae6;transform:scaleX(1.1071);">28,904</div>
<div class="t " style="left:648.80px;transform-origin:0 50%;top:175.35px;font-size:10.10px;color:#1c1c1c;transform:scaleX(0.9600);">CSY</div>
<div class="t " style="left:796.70px;transform-origin:0 50%;top:175.35px;font-size:10.10px;color:#1c1c1c;transform:scaleX(0.9600);">SVO</div>
<div class="t " style="left:926.70px;transform-origin:0 50%;top:175.35px;font-size:10.10px;color:#1c1c1c;transform:scaleX(1.0561);">Business</div>
<div class="t " style="left:1058.70px;transform-origin:0 50%;top:175.35px;font-size:10.10px;color:#1c1c1c;transform:scaleX(1.0296);">2C</div>
<div style="left:326.00px;top:189.96px;width:824.20px;height:15.83px;background:#ebf3fc;"></div>
<div style="left:1150.20px;top:204.99px;width:31.60px;height:0.80px;background:#f3f3f3;"></div>
<div style="left:294.00px;top:189.96px;width:32.00px;height:15.83px;background:#ececec;border-bottom:1.5px solid #9c9c9c;border-right:1.3px solid #8e8e8e;box-sizing:border-box;"></div>
<div class="t " style="left:297.60px;transform-origin:0 50%;top:191.18px;font-size:10.10px;color:#1c1c1c;transform:scaleX(1.0350);">13</div>
<div class="t " style="left:329.90px;transform-origin:0 50%;top:191.18px;font-size:10.10px;color:#1c1c1c;transform:scaleX(1.1313);">9E60AA</div>
<div class="t " style="left:437.00px;transform-origin:0 50%;top:191.18px;font-size:10.10px;color:#1c1c1c;transform:scaleX(1.1352);">0005432000999</div>
<div class="t " style="left:545.80px;transform-origin:0 50%;top:191.18px;font-size:10.10px;color:#1a1ae6;transform:scaleX(1.1071);">28,904</div>
<div class="t " style="left:648.80px;transform-origin:0 50%;top:191.18px;font-size:10.10px;color:#1c1c1c;transform:scaleX(0.9600);">CSY</div>
<div class="t " style="left:796.70px;transform-origin:0 50%;top:191.18px;font-size:10.10px;color:#1c1c1c;transform:scaleX(0.9600);">SVO</div>
<div class="t " style="left:926.70px;transform-origin:0 50%;top:191.18px;font-size:10.10px;color:#1c1c1c;transform:scaleX(1.0566);">Economy</div>
<div class="t " style="left:1058.70px;transform-origin:0 50%;top:191.18px;font-size:10.10px;color:#1c1c1c;transform:scaleX(1.0363);">8F</div>
<div style="left:326.00px;top:205.79px;width:824.20px;height:15.83px;background:#ffffff;"></div>
<div style="left:1150.20px;top:220.82px;width:31.60px;height:0.80px;background:#f3f3f3;"></div>
<div style="left:294.00px;top:205.79px;width:32.00px;height:15.83px;background:#ececec;border-bottom:1.5px solid #9c9c9c;border-right:1.3px solid #8e8e8e;box-sizing:border-box;"></div>
<div class="t " style="left:297.60px;transform-origin:0 50%;top:207.00px;font-size:10.10px;color:#1c1c1c;transform:scaleX(1.0350);">14</div>
<div class="t " style="left:329.90px;transform-origin:0 50%;top:207.00px;font-size:10.10px;color:#1c1c1c;transform:scaleX(1.1307);">69DAD1</div>
<div class="t " style="left:437.00px;transform-origin:0 50%;top:207.00px;font-size:10.10px;color:#1c1c1c;transform:scaleX(1.1352);">0005432001000</div>
<div class="t " style="left:545.80px;transform-origin:0 50%;top:207.00px;font-size:10.10px;color:#1a1ae6;transform:scaleX(1.1071);">28,895</div>
<div class="t " style="left:648.80px;transform-origin:0 50%;top:207.00px;font-size:10.10px;color:#1c1c1c;transform:scaleX(0.9600);">CSY</div>
<div class="t " style="left:796.70px;transform-origin:0 50%;top:207.00px;font-size:10.10px;color:#1c1c1c;transform:scaleX(0.9600);">SVO</div>
<div class="t " style="left:926.70px;transform-origin:0 50%;top:207.00px;font-size:10.10px;color:#1c1c1c;transform:scaleX(1.0566);">Economy</div>
<div class="t " style="left:1058.70px;transform-origin:0 50%;top:207.00px;font-size:10.10px;color:#1c1c1c;transform:scaleX(0.9539);">11D</div>
<div style="left:326.00px;top:221.62px;width:824.20px;height:15.83px;background:#ebf3fc;"></div>
<div style="left:1150.20px;top:236.65px;width:31.60px;height:0.80px;background:#f3f3f3;"></div>
<div style="left:294.00px;top:221.62px;width:32.00px;height:15.83px;background:#ececec;border-bottom:1.5px solid #9c9c9c;border-right:1.3px solid #8e8e8e;box-sizing:border-box;"></div>
<div class="t " style="left:297.60px;transform-origin:0 50%;top:222.83px;font-size:10.10px;color:#1c1c1c;transform:scaleX(1.0350);">15</div>
<div class="t " style="left:329.90px;transform-origin:0 50%;top:222.83px;font-size:10.10px;color:#1c1c1c;transform:scaleX(1.1307);">69DAD1</div>
<div class="t " style="left:437.00px;transform-origin:0 50%;top:222.83px;font-size:10.10px;color:#1c1c1c;transform:scaleX(1.1352);">0005432001001</div>
<div class="t " style="left:545.80px;transform-origin:0 50%;top:222.83px;font-size:10.10px;color:#1a1ae6;transform:scaleX(1.1071);">28,895</div>
<div class="t " style="left:648.80px;transform-origin:0 50%;top:222.83px;font-size:10.10px;color:#1c1c1c;transform:scaleX(0.9600);">CSY</div>
<div class="t " style="left:796.70px;transform-origin:0 50%;top:222.83px;font-size:10.10px;color:#1c1c1c;transform:scaleX(0.9600);">SVO</div>
<div class="t " style="left:926.70px;transform-origin:0 50%;top:222.83px;font-size:10.10px;color:#1c1c1c;transform:scaleX(1.0566);">Economy</div>
<div class="t " style="left:1058.70px;transform-origin:0 50%;top:222.83px;font-size:10.10px;color:#1c1c1c;transform:scaleX(0.9537);">11A</div>
<div style="left:326.00px;top:237.45px;width:824.20px;height:15.83px;background:#ffffff;"></div>
<div style="left:1150.20px;top:252.48px;width:31.60px;height:0.80px;background:#f3f3f3;"></div>
<div style="left:294.00px;top:237.45px;width:32.00px;height:15.83px;background:#ececec;border-bottom:1.5px solid #9c9c9c;border-right:1.3px solid #8e8e8e;box-sizing:border-box;"></div>
<div class="t " style="left:297.60px;transform-origin:0 50%;top:238.66px;font-size:10.10px;color:#1c1c1c;transform:scaleX(1.0350);">16</div>
<div class="t " style="left:329.90px;transform-origin:0 50%;top:238.66px;font-size:10.10px;color:#1c1c1c;transform:scaleX(1.1307);">69DAD1</div>
<div class="t " style="left:437.00px;transform-origin:0 50%;top:238.66px;font-size:10.10px;color:#1c1c1c;transform:scaleX(1.1352);">0005432001002</div>
<div class="t " style="left:545.80px;transform-origin:0 50%;top:238.66px;font-size:10.10px;color:#1a1ae6;transform:scaleX(1.1071);">28,895</div>
<div class="t " style="left:648.80px;transform-origin:0 50%;top:238.66px;font-size:10.10px;color:#1c1c1c;transform:scaleX(0.9600);">CSY</div>
<div class="t " style="left:796.70px;transform-origin:0 50%;top:238.66px;font-size:10.10px;color:#1c1c1c;transform:scaleX(0.9600);">SVO</div>
<div class="t " style="left:926.70px;transform-origin:0 50%;top:238.66px;font-size:10.10px;color:#1c1c1c;transform:scaleX(1.0566);">Economy</div>
<div class="t " style="left:1058.70px;transform-origin:0 50%;top:238.66px;font-size:10.10px;color:#1c1c1c;transform:scaleX(1.0055);">12C</div>
<div style="left:326.00px;top:253.28px;width:824.20px;height:15.83px;background:#ebf3fc;"></div>
<div style="left:1150.20px;top:268.31px;width:31.60px;height:0.80px;background:#f3f3f3;"></div>
<div style="left:294.00px;top:253.28px;width:32.00px;height:15.83px;background:#ececec;border-bottom:1.5px solid #9c9c9c;border-right:1.3px solid #8e8e8e;box-sizing:border-box;"></div>
<div class="t " style="left:297.60px;transform-origin:0 50%;top:254.49px;font-size:10.10px;color:#1c1c1c;transform:scaleX(1.0350);">17</div>
<div class="t " style="left:329.90px;transform-origin:0 50%;top:254.49px;font-size:10.10px;color:#1c1c1c;transform:scaleX(1.1319);">08A2A5</div>
<div class="t " style="left:437.00px;transform-origin:0 50%;top:254.49px;font-size:10.10px;color:#1c1c1c;transform:scaleX(1.1352);">0005432001003</div>
<div class="t " style="left:545.80px;transform-origin:0 50%;top:254.49px;font-size:10.10px;color:#1a1ae6;transform:scaleX(1.1071);">28,948</div>
<div class="t " style="left:648.80px;transform-origin:0 50%;top:254.49px;font-size:10.10px;color:#1c1c1c;transform:scaleX(0.9600);">CSY</div>
<div class="t " style="left:796.70px;transform-origin:0 50%;top:254.49px;font-size:10.10px;color:#1c1c1c;transform:scaleX(0.9600);">SVO</div>
<div class="t " style="left:926.70px;transform-origin:0 50%;top:254.49px;font-size:10.10px;color:#1c1c1c;transform:scaleX(1.0561);">Business</div>
<div class="t " style="left:1058.70px;transform-origin:0 50%;top:254.49px;font-size:10.10px;color:#1c1c1c;transform:scaleX(1.0296);">2C</div>
<div style="left:326.00px;top:269.11px;width:824.20px;height:15.83px;background:#ffffff;"></div>
<div style="left:1150.20px;top:284.14px;width:31.60px;height:0.80px;background:#f3f3f3;"></div>
<div style="left:294.00px;top:269.11px;width:32.00px;height:15.83px;background:#ececec;border-bottom:1.5px solid #9c9c9c;border-right:1.3px solid #8e8e8e;box-sizing:border-box;"></div>
<div class="t " style="left:297.60px;transform-origin:0 50%;top:270.32px;font-size:10.10px;color:#1c1c1c;transform:scaleX(1.0350);">18</div>
<div class="t " style="left:329.90px;transform-origin:0 50%;top:270.32px;font-size:10.10px;color:#1c1c1c;transform:scaleX(1.1319);">08A2A5</div>
<div class="t " style="left:437.00px;transform-origin:0 50%;top:270.32px;font-size:10.10px;color:#1c1c1c;transform:scaleX(1.1352);">0005432001004</div>
<div class="t " style="left:545.80px;transform-origin:0 50%;top:270.32px;font-size:10.10px;color:#1a1ae6;transform:scaleX(1.1071);">28,948</div>
<div class="t " style="left:648.80px;transform-origin:0 50%;top:270.32px;font-size:10.10px;color:#1c1c1c;transform:scaleX(0.9600);">CSY</div>
<div class="t " style="left:796.70px;transform-origin:0 50%;top:270.32px;font-size:10.10px;color:#1c1c1c;transform:scaleX(0.9600);">SVO</div>
<div class="t " style="left:926.70px;transform-origin:0 50%;top:270.32px;font-size:10.10px;color:#1c1c1c;transform:scaleX(1.0566);">Economy</div>
<div class="t " style="left:1058.70px;transform-origin:0 50%;top:270.32px;font-size:10.10px;color:#1c1c1c;transform:scaleX(1.0363);">6F</div>
<div style="left:326.00px;top:284.94px;width:824.20px;height:15.83px;background:#ebf3fc;"></div>
<div style="left:1150.20px;top:299.97px;width:31.60px;height:0.80px;background:#f3f3f3;"></div>
<div style="left:294.00px;top:284.94px;width:32.00px;height:15.83px;background:#ececec;border-bottom:1.5px solid #9c9c9c;border-right:1.3px solid #8e8e8e;box-sizing:border-box;"></div>
<div class="t " style="left:297.60px;transform-origin:0 50%;top:286.15px;font-size:10.10px;color:#1c1c1c;transform:scaleX(1.0350);">19</div>
<div class="t " style="left:329.90px;transform-origin:0 50%;top:286.15px;font-size:10.10px;color:#1c1c1c;transform:scaleX(1.1302);">C2CAB7</div>
<div class="t " style="left:437.00px;transform-origin:0 50%;top:286.15px;font-size:10.10px;color:#1c1c1c;transform:scaleX(1.1352);">0005432001005</div>
<div class="t " style="left:545.80px;transform-origin:0 50%;top:286.15px;font-size:10.10px;color:#1a1ae6;transform:scaleX(1.1071);">28,942</div>
<div class="t " style="left:648.80px;transform-origin:0 50%;top:286.15px;font-size:10.10px;color:#1c1c1c;transform:scaleX(0.9600);">CSY</div>
<div class="t " style="left:796.70px;transform-origin:0 50%;top:286.15px;font-size:10.10px;color:#1c1c1c;transform:scaleX(0.9600);">SVO</div>
<div class="t " style="left:926.70px;transform-origin:0 50%;top:286.15px;font-size:10.10px;color:#1c1c1c;transform:scaleX(1.0566);">Economy</div>
<div class="t " style="left:1058.70px;transform-origin:0 50%;top:286.15px;font-size:10.10px;color:#1c1c1c;transform:scaleX(1.0055);">17C</div>
<div style="left:326.00px;top:300.77px;width:824.20px;height:15.83px;background:#ffffff;"></div>
<div style="left:1150.20px;top:315.80px;width:31.60px;height:0.80px;background:#f3f3f3;"></div>
<div style="left:294.00px;top:300.77px;width:32.00px;height:15.83px;background:#ececec;border-bottom:1.5px solid #9c9c9c;border-right:1.3px solid #8e8e8e;box-sizing:border-box;"></div>
<div class="t " style="left:297.60px;transform-origin:0 50%;top:301.98px;font-size:10.10px;color:#1c1c1c;transform:scaleX(1.1200);">20</div>
<div class="t " style="left:329.90px;transform-origin:0 50%;top:301.98px;font-size:10.10px;color:#1c1c1c;transform:scaleX(1.1307);">C6DA66</div>
<div class="t " style="left:437.00px;transform-origin:0 50%;top:301.98px;font-size:10.10px;color:#1c1c1c;transform:scaleX(1.1352);">0005432001006</div>
<div class="t " style="left:545.80px;transform-origin:0 50%;top:301.98px;font-size:10.10px;color:#1a1ae6;transform:scaleX(1.1071);">28,915</div>
<div class="t " style="left:648.80px;transform-origin:0 50%;top:301.98px;font-size:10.10px;color:#1c1c1c;transform:scaleX(0.9600);">CSY</div>
<div class="t " style="left:796.70px;transform-origin:0 50%;top:301.98px;font-size:10.10px;color:#1c1c1c;transform:scaleX(0.9600);">SVO</div>
<div class="t " style="left:926.70px;transform-origin:0 50%;top:301.98px;font-size:10.10px;color:#1c1c1c;transform:scaleX(1.0566);">Economy</div>
<div class="t " style="left:1058.70px;transform-origin:0 50%;top:301.98px;font-size:10.10px;color:#1c1c1c;transform:scaleX(1.0055);">16C</div>
<div style="left:326.00px;top:316.60px;width:824.20px;height:15.83px;background:#ebf3fc;"></div>
<div style="left:1150.20px;top:331.63px;width:31.60px;height:0.80px;background:#f3f3f3;"></div>
<div style="left:294.00px;top:316.60px;width:32.00px;height:15.83px;background:#ececec;border-bottom:1.5px solid #9c9c9c;border-right:1.3px solid #8e8e8e;box-sizing:border-box;"></div>
<div class="t " style="left:297.60px;transform-origin:0 50%;top:317.81px;font-size:10.10px;color:#1c1c1c;transform:scaleX(1.0350);">21</div>
<div class="t " style="left:329.90px;transform-origin:0 50%;top:317.81px;font-size:10.10px;color:#1c1c1c;transform:scaleX(1.1307);">C6DA66</div>
<div class="t " style="left:437.00px;transform-origin:0 50%;top:317.81px;font-size:10.10px;color:#1c1c1c;transform:scaleX(1.1352);">0005432001007</div>
<div class="t " style="left:545.80px;transform-origin:0 50%;top:317.81px;font-size:10.10px;color:#1a1ae6;transform:scaleX(1.1071);">28,915</div>
<div class="t " style="left:648.80px;transform-origin:0 50%;top:317.81px;font-size:10.10px;color:#1c1c1c;transform:scaleX(0.9600);">CSY</div>
<div class="t " style="left:796.70px;transform-origin:0 50%;top:317.81px;font-size:10.10px;color:#1c1c1c;transform:scaleX(0.9600);">SVO</div>
<div class="t " style="left:926.70px;transform-origin:0 50%;top:317.81px;font-size:10.10px;color:#1c1c1c;transform:scaleX(1.0566);">Economy</div>
<div class="t " style="left:1058.70px;transform-origin:0 50%;top:317.81px;font-size:10.10px;color:#1c1c1c;transform:scaleX(1.0296);">8D</div>
<div style="left:432.10px;top:0.00px;width:0.90px;height:326.80px;background:#f0f0f0;"></div>
<div style="left:540.90px;top:0.00px;width:0.90px;height:326.80px;background:#f0f0f0;"></div>
<div style="left:643.90px;top:0.00px;width:0.90px;height:326.80px;background:#f0f0f0;"></div>
<div style="left:791.80px;top:0.00px;width:0.90px;height:326.80px;background:#f0f0f0;"></div>
<div style="left:921.80px;top:0.00px;width:0.90px;height:326.80px;background:#f0f0f0;"></div>
<div style="left:1053.80px;top:0.00px;width:0.90px;height:326.80px;background:#f0f0f0;"></div>
<div style="left:1149.20px;top:0.00px;width:0.90px;height:326.80px;background:#f0f0f0;"></div>
</div>
<div style="left:294.00px;top:292.20px;width:32.00px;height:21.80px;background:#ececec;border-bottom:1.2px solid #8e8e8e;border-right:1.2px solid #8e8e8e;box-sizing:border-box;"></div>
<svg style="left:313.00px;top:298.50px;" width="8.00" height="8.00" viewBox="0 0 8 8"><circle cx="4" cy="4" r="3.3" fill="#fff" stroke="#5aa048" stroke-width="0.8"/><circle cx="4" cy="4" r="1.7" fill="#5aa048"/></svg>
<div style="left:326.00px;top:292.20px;width:107.10px;height:21.80px;background:#dce9fa;border-bottom:1.5px solid #8e8e8e;border-right:1.5px solid #8e8e8e;box-sizing:border-box;"></div>
<div class="t " style="left:331.40px;transform-origin:0 50%;top:294.40px;font-size:8.20px;color:#3d7cc4;">A</div>
<div class="t " style="left:336.00px;transform-origin:0 50%;top:294.00px;font-size:8.00px;color:#3d7cc4;">·</div>
<div class="t " style="left:337.60px;transform-origin:0 50%;top:294.40px;font-size:8.20px;color:#6a9ad4;">Z</div>
<svg style="left:346.60px;top:298.30px;" width="6.00" height="4.00" viewBox="0 0 6 4"><circle cx="1.7" cy="2" r="1.15" fill="none" stroke="#ee8a3c" stroke-width="0.8"/><path d="M2.9 2 H5.6" stroke="#ee8a3c" stroke-width="0.8"/></svg>
<div class="t " style="left:354.40px;transform-origin:0 50%;top:294.40px;font-size:10.10px;color:#1c1c1c;transform:scaleX(1.0643);">book_ref</div>
<svg style="left:417.90px;top:300.10px;" width="6.80" height="4.20" viewBox="0 0 6.8 4.2"><path d="M0 0 H6.8 L3.4 4.2 Z" fill="#3d7cc4"/></svg>
<div style="left:433.10px;top:292.20px;width:108.80px;height:21.80px;background:#ececec;border-bottom:1.5px solid #8e8e8e;border-right:1.5px solid #8e8e8e;box-sizing:border-box;"></div>
<div class="t " style="left:438.50px;transform-origin:0 50%;top:294.40px;font-size:8.20px;color:#3d7cc4;">A</div>
<div class="t " style="left:443.10px;transform-origin:0 50%;top:294.00px;font-size:8.00px;color:#3d7cc4;">·</div>
<div class="t " style="left:444.70px;transform-origin:0 50%;top:294.40px;font-size:8.20px;color:#6a9ad4;">Z</div>
<svg style="left:453.70px;top:298.30px;" width="6.00" height="4.00" viewBox="0 0 6 4"><circle cx="1.7" cy="2" r="1.15" fill="none" stroke="#ee8a3c" stroke-width="0.8"/><path d="M2.9 2 H5.6" stroke="#ee8a3c" stroke-width="0.8"/></svg>
<div class="t " style="left:461.50px;transform-origin:0 50%;top:294.40px;font-size:10.10px;color:#1c1c1c;transform:scaleX(1.0646);">ticket_no</div>
<svg style="left:526.70px;top:300.10px;" width="6.80" height="4.20" viewBox="0 0 6.8 4.2"><path d="M0 0 H6.8 L3.4 4.2 Z" fill="#3d7cc4"/></svg>
<div style="left:541.90px;top:292.20px;width:103.00px;height:21.80px;background:#ececec;border-bottom:1.5px solid #8e8e8e;border-right:1.5px solid #8e8e8e;box-sizing:border-box;"></div>
<div class="t " style="left:547.10px;transform-origin:0 50%;top:294.40px;font-size:8.14px;color:#3d7cc4;transform:scaleX(0.9200);">123</div>
<svg style="left:562.50px;top:298.30px;" width="6.00" height="4.00" viewBox="0 0 6 4"><circle cx="1.7" cy="2" r="1.15" fill="none" stroke="#ee8a3c" stroke-width="0.8"/><path d="M2.9 2 H5.6" stroke="#ee8a3c" stroke-width="0.8"/></svg>
<div class="t " style="left:570.30px;transform-origin:0 50%;top:294.40px;font-size:10.10px;color:#1c1c1c;transform:scaleX(1.0629);">flight_id</div>
<svg style="left:629.70px;top:300.10px;" width="6.80" height="4.20" viewBox="0 0 6.8 4.2"><path d="M0 0 H6.8 L3.4 4.2 Z" fill="#3d7cc4"/></svg>
<div style="left:644.90px;top:292.20px;width:147.90px;height:21.80px;background:#ececec;border-bottom:1.5px solid #8e8e8e;border-right:1.5px solid #8e8e8e;box-sizing:border-box;"></div>
<div class="t " style="left:650.30px;transform-origin:0 50%;top:294.40px;font-size:8.20px;color:#3d7cc4;">A</div>
<div class="t " style="left:654.90px;transform-origin:0 50%;top:294.00px;font-size:8.00px;color:#3d7cc4;">·</div>
<div class="t " style="left:656.50px;transform-origin:0 50%;top:294.40px;font-size:8.20px;color:#6a9ad4;">Z</div>
<svg style="left:665.30px;top:295.70px;" width="6.00" height="6.00" viewBox="0 0 6 6"><rect x="0.4" y="0.4" width="5" height="5" rx="0.6" fill="#f6d6b8" stroke="#e8873a" stroke-width="0.8"/><rect x="1.9" y="1.9" width="2" height="2" fill="#e8873a"/></svg>
<div class="t " style="left:672.60px;transform-origin:0 50%;top:294.40px;font-size:10.10px;color:#1c1c1c;transform:scaleX(1.0696);">departure_airport</div>
<svg style="left:777.60px;top:300.10px;" width="6.80" height="4.20" viewBox="0 0 6.8 4.2"><path d="M0 0 H6.8 L3.4 4.2 Z" fill="#3d7cc4"/></svg>
<div style="left:792.80px;top:292.20px;width:130.00px;height:21.80px;background:#ececec;border-bottom:1.5px solid #8e8e8e;border-right:1.5px solid #8e8e8e;box-sizing:border-box;"></div>
<div class="t " style="left:798.20px;transform-origin:0 50%;top:294.40px;font-size:8.20px;color:#3d7cc4;">A</div>
<div class="t " style="left:802.80px;transform-origin:0 50%;top:294.00px;font-size:8.00px;color:#3d7cc4;">·</div>
<div class="t " style="left:804.40px;transform-origin:0 50%;top:294.40px;font-size:8.20px;color:#6a9ad4;">Z</div>
<svg style="left:813.20px;top:295.70px;" width="6.00" height="6.00" viewBox="0 0 6 6"><rect x="0.4" y="0.4" width="5" height="5" rx="0.6" fill="#f6d6b8" stroke="#e8873a" stroke-width="0.8"/><rect x="1.9" y="1.9" width="2" height="2" fill="#e8873a"/></svg>
<div class="t " style="left:820.50px;transform-origin:0 50%;top:294.40px;font-size:10.10px;color:#1c1c1c;transform:scaleX(1.0682);">arrival_airport</div>
<svg style="left:907.60px;top:300.10px;" width="6.80" height="4.20" viewBox="0 0 6.8 4.2"><path d="M0 0 H6.8 L3.4 4.2 Z" fill="#3d7cc4"/></svg>
<div style="left:922.80px;top:292.20px;width:132.00px;height:21.80px;background:#ececec;border-bottom:1.9px solid #cc5a42;border-right:1.5px solid #8e8e8e;box-sizing:border-box;"></div>
<div class="t " style="left:928.20px;transform-origin:0 50%;top:294.40px;font-size:8.20px;color:#3d7cc4;">A</div>
<div class="t " style="left:932.80px;transform-origin:0 50%;top:294.00px;font-size:8.00px;color:#3d7cc4;">·</div>
<div class="t " style="left:934.40px;transform-origin:0 50%;top:294.40px;font-size:8.20px;color:#6a9ad4;">Z</div>
<div class="t " style="left:942.40px;transform-origin:0 50%;top:294.40px;font-size:10.10px;color:#1c1c1c;transform:scaleX(1.0688);">fare_conditions</div>
<svg style="left:1039.60px;top:300.10px;" width="6.80" height="4.20" viewBox="0 0 6.8 4.2"><path d="M0 0 H6.8 L3.4 4.2 Z" fill="#3d7cc4"/></svg>
<div style="left:1054.80px;top:292.20px;width:95.40px;height:21.80px;background:#ececec;border-bottom:1.9px solid #cc5a42;border-right:1.5px solid #8e8e8e;box-sizing:border-box;"></div>
<div class="t " style="left:1060.20px;transform-origin:0 50%;top:294.40px;font-size:8.20px;color:#3d7cc4;">A</div>
<div class="t " style="left:1064.80px;transform-origin:0 50%;top:294.00px;font-size:8.00px;color:#3d7cc4;">·</div>
<div class="t " style="left:1066.40px;transform-origin:0 50%;top:294.40px;font-size:8.20px;color:#6a9ad4;">Z</div>
<div class="t " style="left:1074.40px;transform-origin:0 50%;top:294.40px;font-size:10.10px;color:#1c1c1c;transform:scaleX(1.0633);">seat_no</div>
<svg style="left:1135.00px;top:300.10px;" width="6.80" height="4.20" viewBox="0 0 6.8 4.2"><path d="M0 0 H6.8 L3.4 4.2 Z" fill="#3d7cc4"/></svg>
<svg style="left:278.50px;top:646.80px;" width="12.00" height="11.00" viewBox="0 0 12 11"><path d="M1 5 Q1.4 1.4 5 1.4 H8 M6.4 0 L8 1.4 L6.4 2.8" fill="none" stroke="#3d7cc4" stroke-width="0.9"/><path d="M11 6 Q10.6 9.6 7 9.6 H4 M5.6 8.2 L4 9.6 L5.6 11" fill="none" stroke="#3d7cc4" stroke-width="0.9"/><path d="M4 3.6 L6 5.4 L4 7.2 M8 3.8 L6 5.6 L8 7.4" fill="none" stroke="#3d7cc4" stroke-width="0.7"/></svg>
<div class="t " style="left:293.30px;transform-origin:0 50%;top:645.30px;font-size:10.10px;color:#5e7a58;transform:scaleX(1.0519);">Refresh</div>
<svg style="left:334.38px;top:651.52px;" width="4.25" height="2.55" viewBox="0 0 5 3"><path d="M0 0 H5 L2.5 3 Z" fill="#222"/></svg>
<svg style="left:345.00px;top:646.50px;" width="1.20" height="12.00" viewBox="0 0 1.2 12"><rect x="0" y="0.00" width="1.2" height="1.2" fill="#b9a898"/><rect x="0" y="3.60" width="1.2" height="1.2" fill="#b9a898"/><rect x="0" y="7.20" width="1.2" height="1.2" fill="#b9a898"/><rect x="0" y="10.80" width="1.2" height="1.2" fill="#b9a898"/></svg>
<svg style="left:351.00px;top:646.80px;" width="11.00" height="11.00" viewBox="0 0 11 11"><circle cx="5.5" cy="5.5" r="4.8" fill="none" stroke="#a8d0dc" stroke-width="0.9"/><path d="M3.2 5.6 L4.9 7.4 L8 3.8" fill="none" stroke="#a8d0dc" stroke-width="0.9"/></svg>
<div class="t " style="left:366.80px;transform-origin:0 50%;top:645.30px;font-size:10.10px;color:#8fa688;transform:scaleX(1.0077);">Save</div>
<svg style="left:393.88px;top:651.52px;" width="4.25" height="2.55" viewBox="0 0 5 3"><path d="M0 0 H5 L2.5 3 Z" fill="#9ab092"/></svg>
<svg style="left:403.00px;top:646.80px;" width="11.60" height="11.00" viewBox="0 0 11.6 11"><rect x="0.5" y="0.5" width="10.6" height="10" rx="0.8" fill="none" stroke="#e8c4a4" stroke-width="0.9"/><path d="M3.2 3 L8.4 8 M8.4 3 L3.2 8" stroke="#e8c4a4" stroke-width="0.9"/></svg>
<div class="t " style="left:419.00px;transform-origin:0 50%;top:645.30px;font-size:10.10px;color:#8fa688;transform:scaleX(1.0528);">Cancel</div>
<svg style="left:457.60px;top:646.50px;" width="1.20" height="12.00" viewBox="0 0 1.2 12"><rect x="0" y="0.00" width="1.2" height="1.2" fill="#b9a898"/><rect x="0" y="3.60" width="1.2" height="1.2" fill="#b9a898"/><rect x="0" y="7.20" width="1.2" height="1.2" fill="#b9a898"/><rect x="0" y="10.80" width="1.2" height="1.2" fill="#b9a898"/></svg>
<svg style="left:462.50px;top:647.00px;" width="13.00" height="11.00" viewBox="0 0 13 11"><path d="M0.5 1.6 H10.6 M0.5 4.4 H10.6 M0.5 7.2 H5" stroke="#4a80c4" stroke-width="1"/><path d="M5.4 10.4 L6 8.2 L10.6 3.8 L12.2 5.4 L7.6 9.8 Z" fill="#ccffbb" stroke="#4a80c4" stroke-width="0.8"/></svg>
<svg style="left:480.20px;top:647.00px;" width="13.00" height="11.00" viewBox="0 0 13 11"><path d="M0.5 1.6 H10 M0.5 4.4 H10 M0.5 7.2 H5" stroke="#a4c4d8" stroke-width="1"/><circle cx="9.4" cy="8" r="2.8" fill="#a4c4d8"/><path d="M9.4 6.6 V9.4 M8 8 H10.8" stroke="#ccffbb" stroke-width="0.8"/></svg>
<svg style="left:497.80px;top:647.00px;" width="13.00" height="11.00" viewBox="0 0 13 11"><path d="M0.5 1.6 H10 M0.5 4.4 H10 M0.5 7.2 H5" stroke="#a4c4d8" stroke-width="1"/><path d="M7.4 7 Q9 6 9.6 7.4 Q9.6 8.4 7.6 10 H10.4" fill="none" stroke="#a4c4d8" stroke-width="0.8"/></svg>
<svg style="left:515.50px;top:647.00px;" width="13.00" height="11.00" viewBox="0 0 13 11"><path d="M0.5 1.6 H10 M0.5 4.4 H10 M0.5 7.2 H5" stroke="#a4c4d8" stroke-width="1"/><circle cx="9.4" cy="8" r="2.8" fill="#a4c4d8"/><path d="M8 8 H10.8" stroke="#ccffbb" stroke-width="0.8"/></svg>
<svg style="left:534.90px;top:646.50px;" width="1.20" height="12.00" viewBox="0 0 1.2 12"><rect x="0" y="0.00" width="1.2" height="1.2" fill="#b9a898"/><rect x="0" y="3.60" width="1.2" height="1.2" fill="#b9a898"/><rect x="0" y="7.20" width="1.2" height="1.2" fill="#b9a898"/><rect x="0" y="10.80" width="1.2" height="1.2" fill="#b9a898"/></svg>
<svg style="left:541.50px;top:647.40px;" width="10.00" height="10.00" viewBox="0 0 10 10"><path d="M1.6 0.6 V9.4 M8.4 0.8 L3.8 5 L8.4 9.2" fill="none" stroke="#a4c8dc" stroke-width="1"/></svg>
<svg style="left:560.00px;top:647.40px;" width="8.00" height="10.00" viewBox="0 0 8 10"><path d="M6.4 0.8 L1.8 5 L6.4 9.2" fill="none" stroke="#a4c8dc" stroke-width="1"/></svg>
<svg style="left:577.00px;top:647.40px;" width="8.00" height="10.00" viewBox="0 0 8 10"><path d="M1.6 0.8 L6.2 5 L1.6 9.2" fill="none" stroke="#3d7cc4" stroke-width="1"/></svg>
<svg style="left:593.50px;top:647.40px;" width="10.00" height="10.00" viewBox="0 0 10 10"><path d="M8.4 0.6 V9.4 M1.6 0.8 L6.2 5 L1.6 9.2" fill="none" stroke="#3d7cc4" stroke-width="1"/></svg>
<svg style="left:611.00px;top:647.00px;" width="11.40" height="11.00" viewBox="0 0 11.4 11"><path d="M3 0.6 H0.6 V3 M8.4 0.6 H10.8 V3 M10.8 8 V10.4 H8.4 M3 10.4 H0.6 V8" fill="none" stroke="#a4c8dc" stroke-width="0.8"/><path d="M4 3 H6.2 Q7.8 3 7.8 5.5 Q7.8 8 6.2 8 H4 Z" fill="none" stroke="#a4c8dc" stroke-width="0.8"/></svg>
<svg style="left:631.70px;top:646.50px;" width="1.20" height="12.00" viewBox="0 0 1.2 12"><rect x="0" y="0.00" width="1.2" height="1.2" fill="#b9a898"/><rect x="0" y="3.60" width="1.2" height="1.2" fill="#b9a898"/><rect x="0" y="7.20" width="1.2" height="1.2" fill="#b9a898"/><rect x="0" y="10.80" width="1.2" height="1.2" fill="#b9a898"/></svg>
<svg style="left:638.60px;top:646.50px;" width="10.00" height="12.00" viewBox="0 0 10 12"><path d="M5 9 V1.2 M2.2 4 L5 1.2 L7.8 4" fill="none" stroke="#3d7cc4" stroke-width="0.9"/><path d="M0.6 11 H9.4" stroke="#3d7cc4" stroke-width="1"/></svg>
<div class="t " style="left:653.40px;transform-origin:0 50%;top:645.30px;font-size:10.10px;color:#5e7a58;transform:scaleX(1.0570);">Export data</div>
<svg style="left:712.17px;top:651.52px;" width="4.25" height="2.55" viewBox="0 0 5 3"><path d="M0 0 H5 L2.5 3 Z" fill="#222"/></svg>
<svg style="left:723.10px;top:646.50px;" width="1.20" height="12.00" viewBox="0 0 1.2 12"><rect x="0" y="0.00" width="1.2" height="1.2" fill="#b9a898"/><rect x="0" y="3.60" width="1.2" height="1.2" fill="#b9a898"/><rect x="0" y="7.20" width="1.2" height="1.2" fill="#b9a898"/><rect x="0" y="10.80" width="1.2" height="1.2" fill="#b9a898"/></svg>
<svg style="left:728.40px;top:646.40px;" width="12.00" height="12.00" viewBox="0 0 12 12"><path d="M11.51 7.46 L10.93 8.86 L9.37 8.33 L8.33 9.37 L8.86 10.93 L7.46 11.51 L6.74 10.03 L5.26 10.03 L4.54 11.51 L3.14 10.93 L3.67 9.37 L2.63 8.33 L1.07 8.86 L0.49 7.46 L1.97 6.74 L1.97 5.26 L0.49 4.54 L1.07 3.14 L2.63 3.67 L3.67 2.63 L3.14 1.07 L4.54 0.49 L5.26 1.97 L6.74 1.97 L7.46 0.49 L8.86 1.07 L8.33 2.63 L9.37 3.67 L10.93 3.14 L11.51 4.54 L10.03 5.26 L10.03 6.74 Z" fill="none" stroke="#3d7cc4" stroke-width="0.85" stroke-linejoin="round"/><circle cx="6" cy="6" r="1.9" fill="none" stroke="#3d7cc4" stroke-width="0.85"/></svg>
<div style="left:746.40px;top:645.00px;width:53.20px;height:14.20px;background:#fff;border-radius:1px;box-shadow:0 0.5px 0.8px rgba(0,0,0,0.25);"></div>
<div class="t " style="left:750.40px;transform-origin:0 50%;top:645.30px;font-size:10.10px;color:#1c1c1c;transform:scaleX(1.1215);">200</div>
<svg style="left:806.50px;top:646.60px;" width="11.00" height="12.00" viewBox="0 0 11 12"><path d="M0.6 3 V1 H10.4 V3 M0.6 9 V11 H10.4 V9" fill="none" stroke="#3d7cc4" stroke-width="0.9"/><path d="M5.5 9 V3.6 M3.8 5.2 L5.5 3.4 L7.2 5.2" fill="none" stroke="#3d7cc4" stroke-width="0.8"/></svg>
<div style="left:820.60px;top:645.60px;width:21.00px;height:13.40px;background:#fcfffb;"></div>
<div class="t " style="left:822.60px;transform-origin:0 50%;top:645.30px;font-size:10.10px;color:#1c1c1c;transform:scaleX(1.0859);">100</div>
<svg style="left:846.60px;top:646.50px;" width="1.20" height="12.00" viewBox="0 0 1.2 12"><rect x="0" y="0.00" width="1.2" height="1.2" fill="#b9a898"/><rect x="0" y="3.60" width="1.2" height="1.2" fill="#b9a898"/><rect x="0" y="7.20" width="1.2" height="1.2" fill="#b9a898"/><rect x="0" y="10.80" width="1.2" height="1.2" fill="#b9a898"/></svg>
<div style="left:866.00px;top:652.20px;width:1.50px;height:1.30px;background:#3d7cc4;"></div>
<div style="left:869.40px;top:652.20px;width:1.50px;height:1.30px;background:#3d7cc4;"></div>
<div style="left:872.80px;top:652.20px;width:1.50px;height:1.30px;background:#3d7cc4;"></div>
<div class="t " style="left:883.60px;transform-origin:0 50%;top:645.30px;font-size:10.10px;color:#1c1c1c;transform:scaleX(1.0989);">100 row(s) fetched - 0.084s, on 2025-07-28 at 17:55:35</div>
<div style="left:1193.00px;top:641.00px;width:8.00px;height:22.00px;background:#f8f8f8;"></div>
<div style="left:2.00px;top:663.00px;width:1200.00px;height:22.00px;background:#f7f7f7;border-radius:0 0 7px 7px;"></div>
<div style="left:2.00px;top:663.20px;width:1200.00px;height:0.80px;background:#e6e6e6;"></div>
<div style="left:110.00px;top:666.00px;width:990.00px;height:19.00px;background:radial-gradient(ellipse 50% 100% at 50% 100%, rgba(0,0,0,0.075) 0%, rgba(0,0,0,0.06) 55%, rgba(0,0,0,0) 100%);"></div>
<div style="left:536.60px;top:664.50px;width:0.80px;height:19.00px;background:#dedede;"></div>
<div style="left:567.50px;top:664.50px;width:0.80px;height:19.00px;background:#dedede;"></div>
<div style="left:590.20px;top:664.50px;width:0.80px;height:19.00px;background:#dedede;"></div>
<div style="left:713.00px;top:664.50px;width:0.80px;height:19.00px;background:#dedede;"></div>
<div style="left:829.70px;top:664.50px;width:0.80px;height:19.00px;background:#dedede;"></div>
<div class="t " style="left:541.40px;transform-origin:0 50%;top:665.80px;font-size:10.10px;color:#1c1c1c;transform:scaleX(0.9406);">CET</div>
<div class="t " style="left:572.60px;transform-origin:0 50%;top:665.80px;font-size:10.10px;color:#1c1c1c;transform:scaleX(1.1037);">en</div>
<div class="t " style="left:596.00px;transform-origin:0 50%;top:665.80px;font-size:10.10px;color:#1c1c1c;transform:scaleX(1.0770);">Writable</div>
<div class="t " style="left:718.00px;transform-origin:0 50%;top:665.80px;font-size:10.10px;color:#1c1c1c;transform:scaleX(1.0854);">Smart Insert</div>
<div class="t " style="left:834.70px;transform-origin:0 50%;top:665.80px;font-size:10.10px;color:#1c1c1c;transform:scaleX(1.0596);">3 : 17 : 39</div>
<svg style="left:947.00px;top:667.00px;" width="1.20" height="12.00" viewBox="0 0 1.2 12"><rect x="0" y="0.00" width="1.2" height="1.2" fill="#c9c0b4"/><rect x="0" y="3.60" width="1.2" height="1.2" fill="#c9c0b4"/><rect x="0" y="7.20" width="1.2" height="1.2" fill="#c9c0b4"/><rect x="0" y="10.80" width="1.2" height="1.2" fill="#c9c0b4"/></svg>
<div style="left:2.00px;top:2.00px;width:1200.00px;height:683.00px;border:1px solid #fff;border-top:none;border-radius:0 0 7px 7px;box-sizing:border-box;"></div>
</div></body></html>
